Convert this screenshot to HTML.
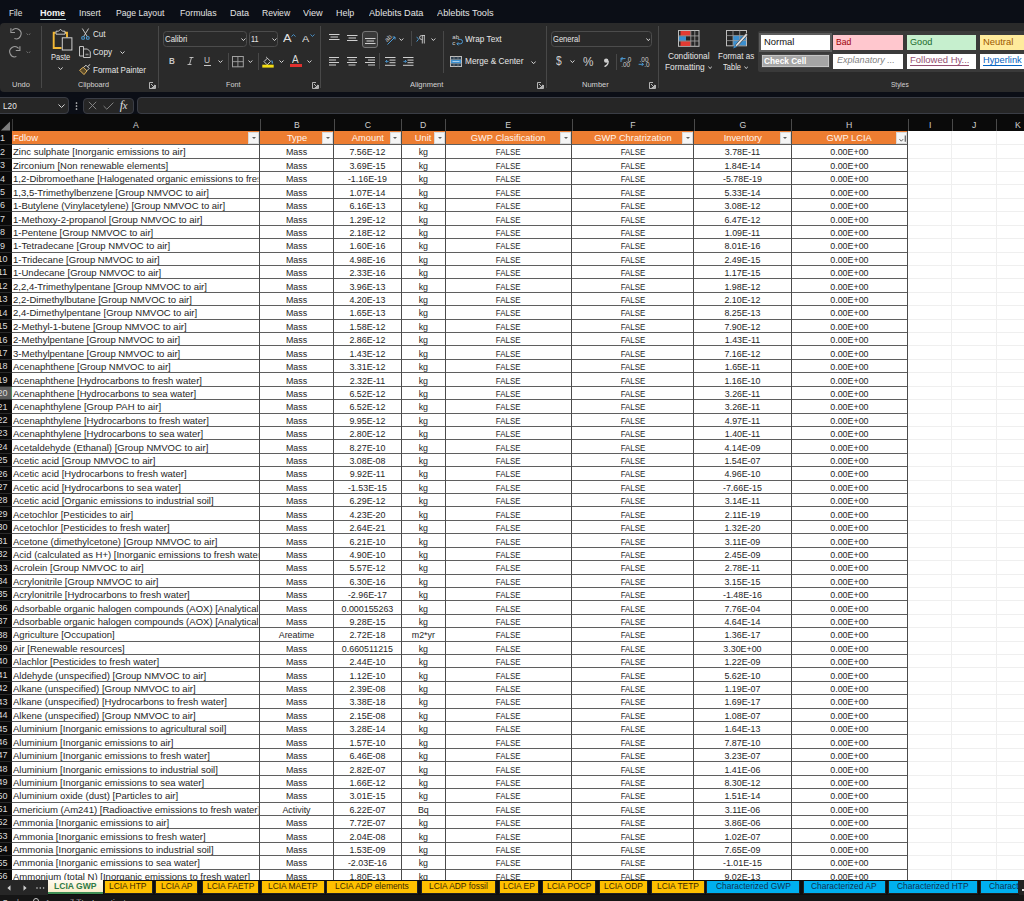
<!DOCTYPE html><html><head><meta charset="utf-8"><style>
*{box-sizing:border-box}
html,body{margin:0;padding:0}
body{width:1024px;height:901px;overflow:hidden;position:relative;background:#0b0e16;font-family:"Liberation Sans",sans-serif;}
.a{position:absolute}
.t{position:absolute;white-space:nowrap;line-height:1;transform-origin:0 0}
.sep{position:absolute;width:1px;background:#484848}
.cell{position:absolute;white-space:nowrap;line-height:13px;height:13px;font-size:9.3px;color:#1e1e1e;overflow:hidden;text-align:center}
.hl{position:absolute;height:1px;background:#5f5f5f}
.vl{position:absolute;width:1px;background:#4c4c4c}
.tab{position:absolute;top:880.7px;height:13.2px;border:1px solid #222;border-top:none}
.ot{background:#ffc000}
.bt{background:#00b0f0}
.fb{position:absolute;width:11px;height:12.3px;background:#f5f5f5;border:1px solid #dadada}
.fb:after{content:"";position:absolute;left:2.7px;top:3.8px;border-left:2.3px solid transparent;border-right:2.3px solid transparent;border-top:2.6px solid #5f5f5f}
</style></head><body>

<div class="t" style="left:8.60px;top:8.10px;font-size:9.45px;color:#e4e4e4;transform:scaleX(0.874);">File</div>
<div class="t" style="left:78.90px;top:8.10px;font-size:9.45px;color:#e4e4e4;transform:scaleX(0.919);">Insert</div>
<div class="t" style="left:116.40px;top:8.10px;font-size:9.45px;color:#e4e4e4;transform:scaleX(0.912);">Page Layout</div>
<div class="t" style="left:179.60px;top:8.10px;font-size:9.45px;color:#e4e4e4;transform:scaleX(0.932);">Formulas</div>
<div class="t" style="left:229.60px;top:8.10px;font-size:9.45px;color:#e4e4e4;transform:scaleX(0.956);">Data</div>
<div class="t" style="left:261.60px;top:8.10px;font-size:9.45px;color:#e4e4e4;transform:scaleX(0.907);">Review</div>
<div class="t" style="left:302.90px;top:8.10px;font-size:9.45px;color:#e4e4e4;transform:scaleX(0.965);">View</div>
<div class="t" style="left:336.20px;top:8.10px;font-size:9.45px;color:#e4e4e4;transform:scaleX(0.943);">Help</div>
<div class="t" style="left:368.50px;top:8.10px;font-size:9.45px;color:#e4e4e4;transform:scaleX(0.968);">Ablebits Data</div>
<div class="t" style="left:437.40px;top:8.10px;font-size:9.45px;color:#e4e4e4;transform:scaleX(0.974);">Ablebits Tools</div>
<div class="t" style="left:40.20px;top:8.10px;font-size:9.45px;color:#f4f4f4;transform:scaleX(0.959);font-weight:bold;">Home</div>
<div class="a" style="left:40px;top:18.8px;width:26px;height:1.6px;background:#c6dedb;border-radius:1px"></div>
<div class="a" style="left:0;top:22.6px;width:1030px;height:69.2px;background:#2a2a2a;border-radius:4px"></div>
<div class="sep" style="left:40.6px;top:26px;height:62px"></div>
<div class="sep" style="left:157.9px;top:26px;height:62px"></div>
<div class="sep" style="left:319.6px;top:26px;height:62px"></div>
<div class="sep" style="left:545.6px;top:26px;height:62px"></div>
<div class="sep" style="left:657.7px;top:26px;height:62px"></div>
<div class="sep" style="left:227.5px;top:53px;height:17px"></div>
<div class="sep" style="left:257.7px;top:53px;height:17px"></div>
<div class="sep" style="left:379.4px;top:53px;height:16px"></div>
<div class="sep" style="left:410.6px;top:31px;height:15px"></div>
<div class="sep" style="left:443.4px;top:31px;height:42px"></div>
<div class="sep" style="left:615.6px;top:53.8px;height:16px"></div>
<div class="t" style="left:11.70px;top:81.40px;font-size:7.56px;color:#d4d4d4;transform:scaleX(0.996);">Undo</div>
<div class="t" style="left:78.00px;top:81.40px;font-size:7.56px;color:#d4d4d4;transform:scaleX(0.958);">Clipboard</div>
<div class="t" style="left:225.60px;top:81.40px;font-size:7.56px;color:#d4d4d4;transform:scaleX(0.953);">Font</div>
<div class="t" style="left:410.00px;top:81.40px;font-size:7.56px;color:#d4d4d4;transform:scaleX(0.994);">Alignment</div>
<div class="t" style="left:582.00px;top:81.40px;font-size:7.56px;color:#d4d4d4;transform:scaleX(0.997);">Number</div>
<div class="t" style="left:890.80px;top:81.40px;font-size:7.56px;color:#d4d4d4;transform:scaleX(0.859);">Styles</div>
<svg class="a" style="left:148.8px;top:81.6px" width="7" height="7" viewBox="0 0 7 7"><path d="M6.5 3V6.5H0.5V0.5H4" fill="none" stroke="#c4c4c4" stroke-width="0.9"/><path d="M2 2l3.5 3.5M5.5 2.8v2.7H2.8" fill="none" stroke="#c4c4c4" stroke-width="0.9"/></svg>
<svg class="a" style="left:311.6px;top:81.6px" width="7" height="7" viewBox="0 0 7 7"><path d="M6.5 3V6.5H0.5V0.5H4" fill="none" stroke="#c4c4c4" stroke-width="0.9"/><path d="M2 2l3.5 3.5M5.5 2.8v2.7H2.8" fill="none" stroke="#c4c4c4" stroke-width="0.9"/></svg>
<svg class="a" style="left:537.2px;top:81.6px" width="7" height="7" viewBox="0 0 7 7"><path d="M6.5 3V6.5H0.5V0.5H4" fill="none" stroke="#c4c4c4" stroke-width="0.9"/><path d="M2 2l3.5 3.5M5.5 2.8v2.7H2.8" fill="none" stroke="#c4c4c4" stroke-width="0.9"/></svg>
<svg class="a" style="left:649.2px;top:81.6px" width="7" height="7" viewBox="0 0 7 7"><path d="M6.5 3V6.5H0.5V0.5H4" fill="none" stroke="#c4c4c4" stroke-width="0.9"/><path d="M2 2l3.5 3.5M5.5 2.8v2.7H2.8" fill="none" stroke="#c4c4c4" stroke-width="0.9"/></svg>
<svg class="a" style="left:5px;top:25px" width="25" height="35" viewBox="5 25 25 35"><g fill="none" stroke="#9c9c9c" stroke-width="1.1"><path d="M12.2 30.3A5.1 5.1 0 1 1 14.4 38.6"/><path d="M10.9 28.3V32.5H15"/></g><g fill="none" stroke="#9c9c9c" stroke-width="1.1" transform="matrix(-1 0 0 1 30.8 18)"><path d="M12.2 30.3A5.1 5.1 0 1 1 14.4 38.6"/><path d="M10.9 28.3V32.5H15"/></g></svg>
<svg class="a" style="left:26.30px;top:32.50px" width="4.9" height="2.8" viewBox="-0.5 -0.5 4.9 2.8"><path d="M0 0L1.95 1.80L3.90 0" fill="none" stroke="#777" stroke-width="0.9"/></svg>
<svg class="a" style="left:26.30px;top:50.50px" width="4.9" height="2.8" viewBox="-0.5 -0.5 4.9 2.8"><path d="M0 0L1.95 1.80L3.90 0" fill="none" stroke="#777" stroke-width="0.9"/></svg>
<svg class="a" style="left:51px;top:27.5px" width="23" height="23" viewBox="0 0 23 23">
<path d="M4.5 4.8H2.7V20H10.5" fill="none" stroke="#f2b836" stroke-width="1.9"/>
<path d="M13.5 4.8H16V9.5" fill="none" stroke="#f2b836" stroke-width="1.9"/>
<path d="M5 6.2V3.2H7.6L9.5 1.2L11.4 3.2H14V6.2Z" fill="#292929" stroke="#d4d4d4" stroke-width="0.9"/>
<rect x="11.3" y="9.8" width="9.6" height="12.2" fill="#292929" stroke="#cfcfcf" stroke-width="1"/>
</svg>
<div class="t" style="left:50.80px;top:52.99px;font-size:8.87px;color:#e6e6e6;transform:scaleX(0.848);">Paste</div>
<svg class="a" style="left:57.70px;top:66.90px" width="5.2" height="3.0" viewBox="-0.5 -0.5 5.2 3.0"><path d="M0 0L2.10 2.00L4.20 0" fill="none" stroke="#d8d8d8" stroke-width="1"/></svg>
<svg class="a" style="left:80.5px;top:28px" width="9" height="12" viewBox="0 0 9 12">
<path d="M1.3 0.5L6.3 8.6M7.6 0.5L2.6 8.6" stroke="#d4d4d4" stroke-width="0.9" fill="none"/>
<circle cx="2.1" cy="9.9" r="1.4" fill="none" stroke="#4c9bd6" stroke-width="1.1"/><circle cx="6.8" cy="9.9" r="1.4" fill="none" stroke="#4c9bd6" stroke-width="1.1"/>
</svg>
<div class="t" style="left:92.90px;top:29.82px;font-size:8.72px;color:#e6e6e6;transform:scaleX(0.922);">Cut</div>
<svg class="a" style="left:79px;top:46px" width="12" height="12" viewBox="0 0 12 12">
<path d="M4.5 0.5H0.5V10H4" fill="none" stroke="#d4d4d4" stroke-width="0.9"/>
<path d="M4.5 3H8.5L11.3 5.8V11.5H4.5Z" fill="none" stroke="#d4d4d4" stroke-width="0.9"/>
<path d="M4.5 0.5V3" stroke="#d4d4d4" stroke-width="0.9"/>
<path d="M6.5 8.5h3" stroke="#888" stroke-width="1.6"/>
</svg>
<div class="t" style="left:92.90px;top:48.12px;font-size:8.72px;color:#e6e6e6;transform:scaleX(0.933);">Copy</div>
<svg class="a" style="left:120.10px;top:51.30px" width="5.0" height="3.0" viewBox="-0.5 -0.5 5.0 3.0"><path d="M0 0L2.00 2.00L4.00 0" fill="none" stroke="#d8d8d8" stroke-width="1"/></svg>
<svg class="a" style="left:79px;top:64px" width="12" height="11" viewBox="0 0 12 11">
<path d="M0.6 6.2L4.3 3.2L8 6.9L5 10.6Z" fill="#5a4a2a" stroke="#f0c060" stroke-width="0.9"/>
<path d="M4.6 3.4L7 1.2L10.2 4.4L8 6.7" fill="none" stroke="#d8d8d8" stroke-width="0.9"/>
<path d="M8.6 2.6L11.2 0.4" stroke="#d8d8d8" stroke-width="1"/>
</svg>
<div class="t" style="left:92.90px;top:66.12px;font-size:8.72px;color:#e6e6e6;transform:scaleX(0.919);">Format Painter</div>
<div class="a" style="left:163.4px;top:31.1px;width:83.3px;height:16.4px;border:1px solid #4c4c4c;border-radius:3.5px"></div>
<div class="t" style="left:164.80px;top:35.17px;font-size:9.01px;color:#e6e6e6;transform:scaleX(0.877);">Calibri</div>
<svg class="a" style="left:240.80px;top:38.20px" width="4.9" height="3.1" viewBox="-0.5 -0.5 4.9 3.1"><path d="M0 0L1.95 2.10L3.90 0" fill="none" stroke="#d8d8d8" stroke-width="1"/></svg>
<div class="a" style="left:249px;top:31.1px;width:29px;height:16.4px;border:1px solid #4c4c4c;border-radius:3.5px"></div>
<div class="t" style="left:251.30px;top:35.17px;font-size:9.01px;color:#e6e6e6;transform:scaleX(0.800);">11</div>
<svg class="a" style="left:272.00px;top:38.20px" width="5.0" height="3.1" viewBox="-0.5 -0.5 5.0 3.1"><path d="M0 0L2.00 2.10L4.00 0" fill="none" stroke="#d8d8d8" stroke-width="1"/></svg>
<div class="t" style="left:282.70px;top:33.20px;font-size:11.34px;color:#e0e0e0;transform:scaleX(1.132);">A</div>
<svg class="a" style="left:290.8px;top:33.6px" width="5" height="3" viewBox="0 0 5 3"><path d="M0.5 2.5L2.5 0.6L4.5 2.5" fill="none" stroke="#4c9bd6" stroke-width="0.9"/></svg>
<div class="t" style="left:301.90px;top:35.17px;font-size:9.01px;color:#e0e0e0;transform:scaleX(1.209);">A</div>
<svg class="a" style="left:309.5px;top:34px" width="5" height="3" viewBox="0 0 5 3"><path d="M0.5 0.5L2.5 2.4L4.5 0.5" fill="none" stroke="#4c9bd6" stroke-width="0.9"/></svg>
<div class="t" style="left:168.60px;top:55.83px;font-size:9.88px;color:#c8c8c8;transform:scaleX(0.815);font-weight:bold;">B</div>
<svg class="a" style="left:186.5px;top:57px" width="7" height="8" viewBox="0 0 7 8"><path d="M2.5 0.5h4M0.5 7.5h4M4.5 0.5L2.5 7.5" fill="none" stroke="#c8c8c8" stroke-width="0.9"/></svg>
<div class="t" style="left:204.20px;top:55.93px;font-size:9.30px;color:#c8c8c8;transform:scaleX(0.896);">U</div>
<div class="a" style="left:204px;top:65.2px;width:6.5px;height:0.9px;background:#c8c8c8"></div>
<svg class="a" style="left:218.10px;top:60.00px" width="4.9" height="3.0" viewBox="-0.5 -0.5 4.9 3.0"><path d="M0 0L1.95 2.00L3.90 0" fill="none" stroke="#d8d8d8" stroke-width="1"/></svg>
<svg class="a" style="left:231.5px;top:56px" width="12" height="11.5" viewBox="0 0 12 11.5"><rect x="0.5" y="0.5" width="10.8" height="10.3" fill="none" stroke="#a0a0a0" stroke-width="1"/><path d="M5.9 0.5v10.3M0.5 5.65h10.8" stroke="#a0a0a0" stroke-width="0.9"/></svg>
<svg class="a" style="left:248.30px;top:60.00px" width="4.8" height="3.0" viewBox="-0.5 -0.5 4.8 3.0"><path d="M0 0L1.90 2.00L3.80 0" fill="none" stroke="#d8d8d8" stroke-width="1"/></svg>
<svg class="a" style="left:261.5px;top:55.5px" width="12" height="12.5" viewBox="0 0 12 12.5">
<path d="M2 5.6L5.4 2.2L8.6 5.4L5.2 8.8Z" fill="none" stroke="#dcdcdc" stroke-width="0.9"/>
<path d="M5.4 2.2L4.2 1" stroke="#dcdcdc" stroke-width="0.9"/>
<path d="M9.6 4.5C10.6 6 10.6 7 9.8 7.4" fill="none" stroke="#4c9bd6" stroke-width="1.2"/>
<rect x="0.3" y="8.7" width="11.4" height="2.9" fill="#f2dc14"/>
</svg>
<svg class="a" style="left:278.50px;top:60.00px" width="5.0" height="3.0" viewBox="-0.5 -0.5 5.0 3.0"><path d="M0 0L2.00 2.00L4.00 0" fill="none" stroke="#d8d8d8" stroke-width="1"/></svg>
<div class="t" style="left:292.40px;top:54.89px;font-size:10.17px;color:#dcdcdc;transform:scaleX(0.983);">A</div>
<div class="a" style="left:289.7px;top:64.3px;width:12.5px;height:3px;background:#e0302e"></div>
<svg class="a" style="left:306.70px;top:60.00px" width="4.9" height="3.0" viewBox="-0.5 -0.5 4.9 3.0"><path d="M0 0L1.95 2.00L3.90 0" fill="none" stroke="#d8d8d8" stroke-width="1"/></svg>
<svg class="a" style="left:328.5px;top:33px" width="12" height="12" viewBox="0 0 12 12"><path d="M0 1.5H10.5" stroke="#cfcfcf" stroke-width="1"/><path d="M1.5 4H9" stroke="#cfcfcf" stroke-width="1"/><path d="M0 6.5H10.5" stroke="#cfcfcf" stroke-width="1"/></svg>
<svg class="a" style="left:346.5px;top:33px" width="12" height="12" viewBox="0 0 12 12"><path d="M0 2.5H10.5" stroke="#cfcfcf" stroke-width="1"/><path d="M1.5 5H9" stroke="#cfcfcf" stroke-width="1"/><path d="M0 7.5H10.5" stroke="#cfcfcf" stroke-width="1"/></svg>
<div class="a" style="left:361.9px;top:31.2px;width:15.9px;height:16.5px;border:1px solid #777;border-radius:3px;background:#3a3a3a"></div>
<svg class="a" style="left:364.5px;top:33.5px" width="12" height="12" viewBox="0 0 12 12"><path d="M0 4.5H10.5" stroke="#cfcfcf" stroke-width="1"/><path d="M1.5 7H9" stroke="#cfcfcf" stroke-width="1"/><path d="M0 9.5H10.5" stroke="#cfcfcf" stroke-width="1"/></svg>
<svg class="a" style="left:384px;top:32.5px" width="13" height="13" viewBox="0 0 13 13">
<text x="0.5" y="7.5" font-size="6.5" fill="#d0d0d0" font-family="Liberation Sans" transform="rotate(-45 4 5)">ab</text>
<path d="M3.5 11.5L11 4M8.5 4H11V6.5" fill="none" stroke="#4c9bd6" stroke-width="1"/>
</svg>
<svg class="a" style="left:399.00px;top:37.80px" width="4.8" height="3.0" viewBox="-0.5 -0.5 4.8 3.0"><path d="M0 0L1.90 2.00L3.80 0" fill="none" stroke="#d8d8d8" stroke-width="1"/></svg>
<svg class="a" style="left:415.5px;top:34.5px" width="10" height="9" viewBox="0 0 10 9">
<path d="M0.6 1.8L2.6 4.2L0.6 6.6" fill="none" stroke="#4c9bd6" stroke-width="0.9"/>
<path d="M6.3 0.5V8.5M8.3 0.5V8.5M9 0.5H5.6A2 2 0 0 0 5.6 4.5H6.3" fill="none" stroke="#d0d0d0" stroke-width="0.9"/>
</svg>
<svg class="a" style="left:430.80px;top:37.80px" width="4.8" height="3.0" viewBox="-0.5 -0.5 4.8 3.0"><path d="M0 0L1.90 2.00L3.80 0" fill="none" stroke="#d8d8d8" stroke-width="1"/></svg>
<svg class="a" style="left:329px;top:56px" width="12" height="12" viewBox="0 0 12 12"><path d="M0 1.5H10" stroke="#cfcfcf" stroke-width="1"/><path d="M0 4H7" stroke="#cfcfcf" stroke-width="1"/><path d="M0 6.5H10" stroke="#cfcfcf" stroke-width="1"/><path d="M0 9H7" stroke="#cfcfcf" stroke-width="1"/></svg>
<svg class="a" style="left:346.5px;top:56px" width="12" height="12" viewBox="0 0 12 12"><path d="M0 1.5H10" stroke="#cfcfcf" stroke-width="1"/><path d="M1.5 4H8.5" stroke="#cfcfcf" stroke-width="1"/><path d="M0 6.5H10" stroke="#cfcfcf" stroke-width="1"/><path d="M1.5 9H8.5" stroke="#cfcfcf" stroke-width="1"/></svg>
<svg class="a" style="left:365px;top:56px" width="12" height="12" viewBox="0 0 12 12"><path d="M0 1.5H10" stroke="#cfcfcf" stroke-width="1"/><path d="M3 4H10" stroke="#cfcfcf" stroke-width="1"/><path d="M0 6.5H10" stroke="#cfcfcf" stroke-width="1"/><path d="M3 9H10" stroke="#cfcfcf" stroke-width="1"/></svg>
<svg class="a" style="left:384.5px;top:56px" width="11" height="11" viewBox="0 0 11 11">
<path d="M0 1.5h10.5M4.5 4.1h6M4.5 6.7h6M0 9.3h10.5" stroke="#cfcfcf" stroke-width="1"/>
<path d="M3.6 5.4H0.6M2 4L0.6 5.4L2 6.8" fill="none" stroke="#4c9bd6" stroke-width="0.9"/>
</svg>
<svg class="a" style="left:402.5px;top:56px" width="11" height="11" viewBox="0 0 11 11">
<path d="M0 1.5h10.5M4.5 4.1h6M4.5 6.7h6M0 9.3h10.5" stroke="#cfcfcf" stroke-width="1"/>
<path d="M0.4 5.4H3.4M2 4L3.4 5.4L2 6.8" fill="none" stroke="#4c9bd6" stroke-width="0.9"/>
</svg>
<svg class="a" style="left:451.5px;top:33.5px" width="12" height="12" viewBox="0 0 12 12">
<text x="0.3" y="5.3" font-size="6" fill="#d8d8d8" font-family="Liberation Sans">ab</text>
<text x="0.3" y="11.3" font-size="6" fill="#d8d8d8" font-family="Liberation Sans">c</text>
<path d="M5 9.8H8.3A2.2 2.2 0 0 0 8.3 5.4H6M6.3 8.3L4.8 9.8L6.3 11.3" fill="none" stroke="#4c9bd6" stroke-width="1"/>
</svg>
<div class="t" style="left:464.50px;top:35.42px;font-size:8.72px;color:#e6e6e6;transform:scaleX(0.940);">Wrap Text</div>
<svg class="a" style="left:450px;top:55.8px" width="12" height="11" viewBox="0 0 12 11">
<rect x="0.5" y="0.5" width="11" height="10" fill="#2b3f52" stroke="#bdbdbd" stroke-width="1"/>
<rect x="1" y="3.5" width="10" height="4" fill="#3a8fd0"/>
<path d="M0.5 3.4h11M0.5 7.6h11M4 0.5v3M8 0.5v3M4 7.6v3M8 7.6v3" stroke="#8a8a8a" stroke-width="0.7"/>
<path d="M2.5 5.5h7" stroke="#d8eaf8" stroke-width="0.7"/>
</svg>
<div class="t" style="left:464.50px;top:57.22px;font-size:8.72px;color:#e6e6e6;transform:scaleX(0.949);">Merge &amp; Center</div>
<svg class="a" style="left:531.20px;top:60.50px" width="5.2" height="3.2" viewBox="-0.5 -0.5 5.2 3.2"><path d="M0 0L2.10 2.20L4.20 0" fill="none" stroke="#d8d8d8" stroke-width="1"/></svg>
<div class="a" style="left:551.2px;top:31.3px;width:100.5px;height:16.1px;border:1px solid #4c4c4c;border-radius:3.5px"></div>
<div class="t" style="left:552.70px;top:35.05px;font-size:9.16px;color:#e6e6e6;transform:scaleX(0.828);">General</div>
<svg class="a" style="left:645.60px;top:37.90px" width="4.7" height="3.2" viewBox="-0.5 -0.5 4.7 3.2"><path d="M0 0L1.85 2.20L3.70 0" fill="none" stroke="#d8d8d8" stroke-width="1"/></svg>
<div class="t" style="left:556.20px;top:55.22px;font-size:12.50px;color:#cfcfcf;transform:scaleX(0.822);">$</div>
<svg class="a" style="left:569.80px;top:60.10px" width="4.9" height="3.1" viewBox="-0.5 -0.5 4.9 3.1"><path d="M0 0L1.95 2.10L3.90 0" fill="none" stroke="#d8d8d8" stroke-width="1"/></svg>
<div class="t" style="left:582.60px;top:54.78px;font-size:13.37px;color:#cfcfcf;transform:scaleX(0.882);">%</div>
<svg class="a" style="left:602.5px;top:57.5px" width="7" height="9" viewBox="0 0 7 9"><circle cx="3.2" cy="2.6" r="2.2" fill="#cfcfcf"/><path d="M5.1 3C5.3 5.5 4 7.6 1.5 8.6" fill="none" stroke="#cfcfcf" stroke-width="1.4"/></svg>
<svg class="a" style="left:619.5px;top:56px" width="13" height="11" viewBox="0 0 13 11">
<text x="6" y="5.8" font-size="6.4" fill="#cfcfcf" font-family="Liberation Sans">.0</text>
<text x="1.2" y="11" font-size="6.4" fill="#cfcfcf" font-family="Liberation Sans">.00</text>
<path d="M5.5 2.6H1M2.6 1L1 2.6L2.6 4.2M1 2.6V6" fill="none" stroke="#4c9bd6" stroke-width="1"/>
</svg>
<svg class="a" style="left:637.5px;top:56px" width="13" height="11" viewBox="0 0 13 11">
<text x="1.6" y="5.8" font-size="6.4" fill="#cfcfcf" font-family="Liberation Sans">.00</text>
<text x="6.2" y="11" font-size="6.4" fill="#cfcfcf" font-family="Liberation Sans">.0</text>
<path d="M0.6 8.3H5.4M3.8 6.7L5.4 8.3L3.8 9.9" fill="none" stroke="#4c9bd6" stroke-width="1"/>
</svg>
<svg class="a" style="left:678.3px;top:30px" width="21.5" height="17" viewBox="0 0 21.5 17">
<rect x="0.5" y="0.5" width="20.5" height="15.8" fill="#262626" stroke="#bdbdbd" stroke-width="1"/>
<rect x="2.5" y="1" width="10" height="4.8" fill="#e23b33"/>
<rect x="1" y="6.2" width="7" height="4.6" fill="#3a8fd0"/>
<rect x="2.5" y="11.2" width="10" height="4.8" fill="#e23b33"/>
<path d="M0.5 5.9h20.5M0.5 11h20.5M12.8 0.5v15.8M16.8 0.5v15.8" stroke="#a8a8a8" stroke-width="0.8"/>
</svg>
<div class="t" style="left:667.80px;top:52.32px;font-size:8.72px;color:#e6e6e6;transform:scaleX(0.951);">Conditional</div>
<div class="t" style="left:664.70px;top:63.02px;font-size:8.72px;color:#e6e6e6;transform:scaleX(0.952);">Formatting</div>
<svg class="a" style="left:707.50px;top:65.90px" width="4.3" height="3.1" viewBox="-0.5 -0.5 4.3 3.1"><path d="M0 0L1.65 2.10L3.30 0" fill="none" stroke="#d8d8d8" stroke-width="0.9"/></svg>
<svg class="a" style="left:725.5px;top:30px" width="23" height="19" viewBox="0 0 23 19">
<rect x="0.5" y="0.5" width="20" height="15.3" fill="#262626" stroke="#bdbdbd" stroke-width="1"/>
<rect x="7" y="5.6" width="13" height="9.7" fill="#3a8fd0"/>
<path d="M0.5 5.6h20M0.5 10.6h20M7 0.5v15.3M13.7 0.5v15.3" stroke="#9a9a9a" stroke-width="0.8"/>
<path d="M8.5 17.5L10 14.2L20 3.2L21.8 4.8L11.8 15.8Z" fill="#dcdcdc" stroke="#262626" stroke-width="0.6"/>
<path d="M7.2 18.6L8.4 15.2L11.2 16.8Z" fill="#3a8fd0"/>
</svg>
<div class="t" style="left:717.80px;top:52.32px;font-size:8.72px;color:#e6e6e6;transform:scaleX(0.922);">Format as</div>
<div class="t" style="left:723.00px;top:63.02px;font-size:8.72px;color:#e6e6e6;transform:scaleX(0.864);">Table</div>
<svg class="a" style="left:743.70px;top:65.90px" width="4.5" height="3.1" viewBox="-0.5 -0.5 4.5 3.1"><path d="M0 0L1.75 2.10L3.50 0" fill="none" stroke="#d8d8d8" stroke-width="0.9"/></svg>
<div class="a" style="left:757.6px;top:30.6px;width:280px;height:41.3px;background:#3a3a3a;border-radius:2px"></div>
<div class="a" style="left:758.6px;top:33px;width:73.5px;height:19px;background:#5c5c5c"></div>
<div class="a" style="left:760.6px;top:35px;width:69.4px;height:15px;background:#ffffff"></div>
<div class="a" style="left:833.3px;top:35px;width:69.6px;height:15px;background:#ffc7ce"></div>
<div class="a" style="left:906.7px;top:34.7px;width:69.3px;height:15.3px;background:#c6efce"></div>
<div class="a" style="left:979.9px;top:34.7px;width:60px;height:15.3px;background:#ffeb9c"></div>
<div class="a" style="left:833.3px;top:53.6px;width:69.6px;height:15.4px;background:#ffffff"></div>
<div class="a" style="left:906.7px;top:53.7px;width:69.3px;height:15.2px;background:#ffffff"></div>
<div class="a" style="left:979.9px;top:53.7px;width:60px;height:15.2px;background:#ffffff"></div>
<div class="a" style="left:760.6px;top:53.6px;width:69.4px;height:14.7px;background:#a5a5a5;border:1.8px solid #454545;box-shadow:inset 0 0 0 0.7px #d0d0d0"></div>
<div class="t" style="left:763.80px;top:37.55px;font-size:9.16px;color:#111111;transform:scaleX(1.029);">Normal</div>
<div class="t" style="left:836.30px;top:37.55px;font-size:9.16px;color:#9c0006;transform:scaleX(0.939);">Bad</div>
<div class="t" style="left:909.70px;top:37.72px;font-size:8.72px;color:#1b6a2c;transform:scaleX(1.046);">Good</div>
<div class="t" style="left:982.90px;top:37.72px;font-size:8.72px;color:#9c5700;transform:scaleX(1.077);">Neutral</div>
<div class="t" style="left:763.80px;top:55.78px;font-size:9.59px;color:#ffffff;transform:scaleX(0.864);font-weight:bold;">Check Cell</div>
<div class="t" style="left:837.00px;top:56.29px;font-size:8.87px;color:#7f7f7f;transform:scaleX(1.020);font-style:italic;">Explanatory ...</div>
<div class="t" style="left:909.70px;top:56.29px;font-size:8.87px;color:#954f72;transform:scaleX(1.072);">Followed Hy...</div>
<div class="a" style="left:909.7px;top:64.7px;width:59.5px;height:0.9px;background:#954f72"></div>
<div class="t" style="left:982.90px;top:56.29px;font-size:8.87px;color:#0563c1;transform:scaleX(1.048);">Hyperlink</div>
<div class="a" style="left:982.9px;top:64.7px;width:38.8px;height:0.9px;background:#0563c1"></div>
<div class="a" style="left:-5px;top:97.3px;width:74px;height:16.4px;background:#262626;border:1px solid #3a3d45;border-radius:4px"></div>
<div class="t" style="left:2.70px;top:101.72px;font-size:8.72px;color:#e8e8e8;transform:scaleX(0.941);">L20</div>
<svg class="a" style="left:58.20px;top:103.80px" width="7.1" height="4.0" viewBox="-0.5 -0.5 7.1 4.0"><path d="M0 0L3.05 3.00L6.10 0" fill="none" stroke="#d8d8d8" stroke-width="1"/></svg>
<svg class="a" style="left:75.3px;top:101.8px" width="3" height="8" viewBox="0 0 3 8"><circle cx="1.5" cy="1" r="0.85" fill="#d0d0d0"/><circle cx="1.5" cy="4" r="0.85" fill="#d0d0d0"/><circle cx="1.5" cy="7" r="0.85" fill="#d0d0d0"/></svg>
<div class="a" style="left:83.3px;top:97.5px;width:50.6px;height:16px;background:#262626;border:1px solid #3a3d45;border-radius:4px"></div>
<svg class="a" style="left:87.5px;top:101.3px" width="9" height="9" viewBox="0 0 9 9"><path d="M0.8 0.8l7.4 7.4M8.2 0.8l-7.4 7.4" stroke="#8c8c8c" stroke-width="0.9"/></svg>
<svg class="a" style="left:102.5px;top:101.8px" width="11" height="8" viewBox="0 0 11 8"><path d="M0.6 4L3.8 7.2L10.4 0.6" fill="none" stroke="#8c8c8c" stroke-width="0.9"/></svg>
<div class="t" style="left:119.8px;top:99.2px;font-size:12.5px;color:#dedede;font-style:italic;font-family:'Liberation Serif'">f<span style="font-size:10.5px;margin-left:-0.5px">x</span></div>
<div class="a" style="left:137.3px;top:97.2px;width:900px;height:16.4px;background:#262626;border:1px solid #3a3d45;border-radius:4px"></div>
<div class="a" style="left:0;top:113.8px;width:1024px;height:17.6px;background:#0a0a0a"></div>
<svg class="a" style="left:0;top:120.5px" width="11" height="10" viewBox="0 0 11 10"><path d="M0.8 9.6L10 0.6V9.6z" fill="#7c7c7c"/></svg>
<div class="a" style="left:259.5px;top:118.8px;width:1px;height:12.6px;background:#4a4a4a"></div>
<div class="t" style="left:11.7px;width:247.8px;top:121.05px;font-size:9.16px;color:#d0d0d0;text-align:center;transform:scaleX(0.95);transform-origin:50% 0">A</div>
<div class="a" style="left:333.5px;top:118.8px;width:1px;height:12.6px;background:#4a4a4a"></div>
<div class="t" style="left:259.5px;width:74.0px;top:121.05px;font-size:9.16px;color:#d0d0d0;text-align:center;transform:scaleX(0.95);transform-origin:50% 0">B</div>
<div class="a" style="left:401.3px;top:118.8px;width:1px;height:12.6px;background:#4a4a4a"></div>
<div class="t" style="left:333.5px;width:67.80000000000001px;top:121.05px;font-size:9.16px;color:#d0d0d0;text-align:center;transform:scaleX(0.95);transform-origin:50% 0">C</div>
<div class="a" style="left:445.4px;top:118.8px;width:1px;height:12.6px;background:#4a4a4a"></div>
<div class="t" style="left:401.3px;width:44.099999999999966px;top:121.05px;font-size:9.16px;color:#d0d0d0;text-align:center;transform:scaleX(0.95);transform-origin:50% 0">D</div>
<div class="a" style="left:571.7px;top:118.8px;width:1px;height:12.6px;background:#4a4a4a"></div>
<div class="t" style="left:445.4px;width:126.30000000000007px;top:121.05px;font-size:9.16px;color:#d0d0d0;text-align:center;transform:scaleX(0.95);transform-origin:50% 0">E</div>
<div class="a" style="left:693.6px;top:118.8px;width:1px;height:12.6px;background:#4a4a4a"></div>
<div class="t" style="left:571.7px;width:121.89999999999998px;top:121.05px;font-size:9.16px;color:#d0d0d0;text-align:center;transform:scaleX(0.95);transform-origin:50% 0">F</div>
<div class="a" style="left:791.3px;top:118.8px;width:1px;height:12.6px;background:#4a4a4a"></div>
<div class="t" style="left:693.6px;width:97.69999999999993px;top:121.05px;font-size:9.16px;color:#d0d0d0;text-align:center;transform:scaleX(0.95);transform-origin:50% 0">G</div>
<div class="a" style="left:907.5px;top:118.8px;width:1px;height:12.6px;background:#4a4a4a"></div>
<div class="t" style="left:791.3px;width:116.20000000000005px;top:121.05px;font-size:9.16px;color:#d0d0d0;text-align:center;transform:scaleX(0.95);transform-origin:50% 0">H</div>
<div class="a" style="left:951.8px;top:118.8px;width:1px;height:12.6px;background:#4a4a4a"></div>
<div class="t" style="left:907.5px;width:44.299999999999955px;top:121.05px;font-size:9.16px;color:#d0d0d0;text-align:center;transform:scaleX(0.95);transform-origin:50% 0">I</div>
<div class="a" style="left:996.2px;top:118.8px;width:1px;height:12.6px;background:#4a4a4a"></div>
<div class="t" style="left:951.8px;width:44.40000000000009px;top:121.05px;font-size:9.16px;color:#d0d0d0;text-align:center;transform:scaleX(0.95);transform-origin:50% 0">J</div>
<div class="t" style="left:996.2px;width:43.799999999999955px;top:121.05px;font-size:9.16px;color:#d0d0d0;text-align:center;transform:scaleX(0.95);transform-origin:50% 0">K</div>
<div class="a" style="left:11.5px;top:119px;width:1px;height:12.4px;background:#3c3c3c"></div>
<div class="a" style="left:11.7px;top:131.3px;width:1013px;height:748.7px;background:#ffffff"></div>
<div class="hl" style="left:907.5px;top:144.22px;width:120px;background:#efefef"></div>
<div class="hl" style="left:907.5px;top:157.63px;width:120px;background:#efefef"></div>
<div class="hl" style="left:907.5px;top:171.05px;width:120px;background:#efefef"></div>
<div class="hl" style="left:907.5px;top:184.46px;width:120px;background:#efefef"></div>
<div class="hl" style="left:907.5px;top:197.88px;width:120px;background:#efefef"></div>
<div class="hl" style="left:907.5px;top:211.29px;width:120px;background:#efefef"></div>
<div class="hl" style="left:907.5px;top:224.71px;width:120px;background:#efefef"></div>
<div class="hl" style="left:907.5px;top:238.12px;width:120px;background:#efefef"></div>
<div class="hl" style="left:907.5px;top:251.53px;width:120px;background:#efefef"></div>
<div class="hl" style="left:907.5px;top:264.95px;width:120px;background:#efefef"></div>
<div class="hl" style="left:907.5px;top:278.37px;width:120px;background:#efefef"></div>
<div class="hl" style="left:907.5px;top:291.78px;width:120px;background:#efefef"></div>
<div class="hl" style="left:907.5px;top:305.19px;width:120px;background:#efefef"></div>
<div class="hl" style="left:907.5px;top:318.61px;width:120px;background:#efefef"></div>
<div class="hl" style="left:907.5px;top:332.02px;width:120px;background:#efefef"></div>
<div class="hl" style="left:907.5px;top:345.44px;width:120px;background:#efefef"></div>
<div class="hl" style="left:907.5px;top:358.86px;width:120px;background:#efefef"></div>
<div class="hl" style="left:907.5px;top:372.27px;width:120px;background:#efefef"></div>
<div class="hl" style="left:907.5px;top:385.69px;width:120px;background:#efefef"></div>
<div class="hl" style="left:907.5px;top:399.10px;width:120px;background:#efefef"></div>
<div class="hl" style="left:907.5px;top:412.51px;width:120px;background:#efefef"></div>
<div class="hl" style="left:907.5px;top:425.93px;width:120px;background:#efefef"></div>
<div class="hl" style="left:907.5px;top:439.34px;width:120px;background:#efefef"></div>
<div class="hl" style="left:907.5px;top:452.76px;width:120px;background:#efefef"></div>
<div class="hl" style="left:907.5px;top:466.18px;width:120px;background:#efefef"></div>
<div class="hl" style="left:907.5px;top:479.59px;width:120px;background:#efefef"></div>
<div class="hl" style="left:907.5px;top:493.00px;width:120px;background:#efefef"></div>
<div class="hl" style="left:907.5px;top:506.42px;width:120px;background:#efefef"></div>
<div class="hl" style="left:907.5px;top:519.84px;width:120px;background:#efefef"></div>
<div class="hl" style="left:907.5px;top:533.25px;width:120px;background:#efefef"></div>
<div class="hl" style="left:907.5px;top:546.66px;width:120px;background:#efefef"></div>
<div class="hl" style="left:907.5px;top:560.08px;width:120px;background:#efefef"></div>
<div class="hl" style="left:907.5px;top:573.50px;width:120px;background:#efefef"></div>
<div class="hl" style="left:907.5px;top:586.91px;width:120px;background:#efefef"></div>
<div class="hl" style="left:907.5px;top:600.33px;width:120px;background:#efefef"></div>
<div class="hl" style="left:907.5px;top:613.74px;width:120px;background:#efefef"></div>
<div class="hl" style="left:907.5px;top:627.15px;width:120px;background:#efefef"></div>
<div class="hl" style="left:907.5px;top:640.57px;width:120px;background:#efefef"></div>
<div class="hl" style="left:907.5px;top:653.98px;width:120px;background:#efefef"></div>
<div class="hl" style="left:907.5px;top:667.40px;width:120px;background:#efefef"></div>
<div class="hl" style="left:907.5px;top:680.82px;width:120px;background:#efefef"></div>
<div class="hl" style="left:907.5px;top:694.23px;width:120px;background:#efefef"></div>
<div class="hl" style="left:907.5px;top:707.64px;width:120px;background:#efefef"></div>
<div class="hl" style="left:907.5px;top:721.06px;width:120px;background:#efefef"></div>
<div class="hl" style="left:907.5px;top:734.47px;width:120px;background:#efefef"></div>
<div class="hl" style="left:907.5px;top:747.89px;width:120px;background:#efefef"></div>
<div class="hl" style="left:907.5px;top:761.31px;width:120px;background:#efefef"></div>
<div class="hl" style="left:907.5px;top:774.72px;width:120px;background:#efefef"></div>
<div class="hl" style="left:907.5px;top:788.13px;width:120px;background:#efefef"></div>
<div class="hl" style="left:907.5px;top:801.55px;width:120px;background:#efefef"></div>
<div class="hl" style="left:907.5px;top:814.96px;width:120px;background:#efefef"></div>
<div class="hl" style="left:907.5px;top:828.38px;width:120px;background:#efefef"></div>
<div class="hl" style="left:907.5px;top:841.80px;width:120px;background:#efefef"></div>
<div class="hl" style="left:907.5px;top:855.21px;width:120px;background:#efefef"></div>
<div class="hl" style="left:907.5px;top:868.62px;width:120px;background:#efefef"></div>
<div class="vl" style="left:951.3px;top:131.3px;height:748.7px;background:#efefef"></div>
<div class="vl" style="left:995.7px;top:131.3px;height:748.7px;background:#efefef"></div>
<div class="a" style="left:11.7px;top:131.3px;width:895.8px;height:13.41px;background:#ed7d31"></div>
<div class="hl" style="left:11.7px;top:144.22px;width:895.8px"></div>
<div class="hl" style="left:11.7px;top:157.63px;width:895.8px"></div>
<div class="hl" style="left:11.7px;top:171.05px;width:895.8px"></div>
<div class="hl" style="left:11.7px;top:184.46px;width:895.8px"></div>
<div class="hl" style="left:11.7px;top:197.88px;width:895.8px"></div>
<div class="hl" style="left:11.7px;top:211.29px;width:895.8px"></div>
<div class="hl" style="left:11.7px;top:224.71px;width:895.8px"></div>
<div class="hl" style="left:11.7px;top:238.12px;width:895.8px"></div>
<div class="hl" style="left:11.7px;top:251.53px;width:895.8px"></div>
<div class="hl" style="left:11.7px;top:264.95px;width:895.8px"></div>
<div class="hl" style="left:11.7px;top:278.37px;width:895.8px"></div>
<div class="hl" style="left:11.7px;top:291.78px;width:895.8px"></div>
<div class="hl" style="left:11.7px;top:305.19px;width:895.8px"></div>
<div class="hl" style="left:11.7px;top:318.61px;width:895.8px"></div>
<div class="hl" style="left:11.7px;top:332.02px;width:895.8px"></div>
<div class="hl" style="left:11.7px;top:345.44px;width:895.8px"></div>
<div class="hl" style="left:11.7px;top:358.86px;width:895.8px"></div>
<div class="hl" style="left:11.7px;top:372.27px;width:895.8px"></div>
<div class="hl" style="left:11.7px;top:385.69px;width:895.8px"></div>
<div class="hl" style="left:11.7px;top:399.10px;width:895.8px"></div>
<div class="hl" style="left:11.7px;top:412.51px;width:895.8px"></div>
<div class="hl" style="left:11.7px;top:425.93px;width:895.8px"></div>
<div class="hl" style="left:11.7px;top:439.34px;width:895.8px"></div>
<div class="hl" style="left:11.7px;top:452.76px;width:895.8px"></div>
<div class="hl" style="left:11.7px;top:466.18px;width:895.8px"></div>
<div class="hl" style="left:11.7px;top:479.59px;width:895.8px"></div>
<div class="hl" style="left:11.7px;top:493.00px;width:895.8px"></div>
<div class="hl" style="left:11.7px;top:506.42px;width:895.8px"></div>
<div class="hl" style="left:11.7px;top:519.84px;width:895.8px"></div>
<div class="hl" style="left:11.7px;top:533.25px;width:895.8px"></div>
<div class="hl" style="left:11.7px;top:546.66px;width:895.8px"></div>
<div class="hl" style="left:11.7px;top:560.08px;width:895.8px"></div>
<div class="hl" style="left:11.7px;top:573.50px;width:895.8px"></div>
<div class="hl" style="left:11.7px;top:586.91px;width:895.8px"></div>
<div class="hl" style="left:11.7px;top:600.33px;width:895.8px"></div>
<div class="hl" style="left:11.7px;top:613.74px;width:895.8px"></div>
<div class="hl" style="left:11.7px;top:627.15px;width:895.8px"></div>
<div class="hl" style="left:11.7px;top:640.57px;width:895.8px"></div>
<div class="hl" style="left:11.7px;top:653.98px;width:895.8px"></div>
<div class="hl" style="left:11.7px;top:667.40px;width:895.8px"></div>
<div class="hl" style="left:11.7px;top:680.82px;width:895.8px"></div>
<div class="hl" style="left:11.7px;top:694.23px;width:895.8px"></div>
<div class="hl" style="left:11.7px;top:707.64px;width:895.8px"></div>
<div class="hl" style="left:11.7px;top:721.06px;width:895.8px"></div>
<div class="hl" style="left:11.7px;top:734.47px;width:895.8px"></div>
<div class="hl" style="left:11.7px;top:747.89px;width:895.8px"></div>
<div class="hl" style="left:11.7px;top:761.31px;width:895.8px"></div>
<div class="hl" style="left:11.7px;top:774.72px;width:895.8px"></div>
<div class="hl" style="left:11.7px;top:788.13px;width:895.8px"></div>
<div class="hl" style="left:11.7px;top:801.55px;width:895.8px"></div>
<div class="hl" style="left:11.7px;top:814.96px;width:895.8px"></div>
<div class="hl" style="left:11.7px;top:828.38px;width:895.8px"></div>
<div class="hl" style="left:11.7px;top:841.80px;width:895.8px"></div>
<div class="hl" style="left:11.7px;top:855.21px;width:895.8px"></div>
<div class="hl" style="left:11.7px;top:868.62px;width:895.8px"></div>
<div class="vl" style="left:259.0px;top:131.3px;height:748.7px"></div>
<div class="vl" style="left:333.0px;top:131.3px;height:748.7px"></div>
<div class="vl" style="left:400.8px;top:131.3px;height:748.7px"></div>
<div class="vl" style="left:444.9px;top:131.3px;height:748.7px"></div>
<div class="vl" style="left:571.2px;top:131.3px;height:748.7px"></div>
<div class="vl" style="left:693.1px;top:131.3px;height:748.7px"></div>
<div class="vl" style="left:790.8px;top:131.3px;height:748.7px"></div>
<div class="vl" style="left:907.0px;top:131.3px;height:748.7px"></div>
<div class="t" style="left:13.4px;top:133.69px;font-size:8.87px;color:#fff5ee;transform:scaleX(1.06)">Fdlow</div>
<div class="fb" style="left:248.00px;top:132px"></div>
<div class="t" style="left:259.5px;width:74.0px;text-align:center;top:133.69px;font-size:8.87px;color:#fff5ee;transform:scaleX(1.05);transform-origin:50% 0">Type</div>
<div class="fb" style="left:322.00px;top:132px"></div>
<div class="t" style="left:333.5px;width:67.80000000000001px;text-align:center;top:133.69px;font-size:8.87px;color:#fff5ee;transform:scaleX(1.05);transform-origin:50% 0">Amount</div>
<div class="fb" style="left:389.80px;top:132px"></div>
<div class="t" style="left:401.3px;width:44.099999999999966px;text-align:center;top:133.69px;font-size:8.87px;color:#fff5ee;transform:scaleX(1.05);transform-origin:50% 0">Unit</div>
<div class="fb" style="left:433.90px;top:132px"></div>
<div class="t" style="left:445.4px;width:126.30000000000007px;text-align:center;top:133.69px;font-size:8.87px;color:#fff5ee;transform:scaleX(1.05);transform-origin:50% 0">GWP Clasification</div>
<div class="fb" style="left:560.20px;top:132px"></div>
<div class="t" style="left:571.7px;width:121.89999999999998px;text-align:center;top:133.69px;font-size:8.87px;color:#fff5ee;transform:scaleX(1.05);transform-origin:50% 0">GWP Chratrization</div>
<div class="fb" style="left:682.10px;top:132px"></div>
<div class="t" style="left:693.6px;width:97.69999999999993px;text-align:center;top:133.69px;font-size:8.87px;color:#fff5ee;transform:scaleX(1.05);transform-origin:50% 0">Inventory</div>
<div class="fb" style="left:779.80px;top:132px"></div>
<div class="t" style="left:791.3px;width:116.20000000000005px;text-align:center;top:133.69px;font-size:8.87px;color:#fff5ee;transform:scaleX(1.05);transform-origin:50% 0">GWP LCIA</div>
<div class="a" style="left:896.00px;top:132px;width:11px;height:12.3px;background:#f5f5f5;border:1px solid #dadada"><svg style="position:absolute;left:1.5px;top:1.5px" width="8" height="8" viewBox="0 0 8 8"><path d="M0.5 4.2L2.3 6.2L4.1 4.2" fill="none" stroke="#5f5f5f" stroke-width="1"/><path d="M6.3 0.5V6.8" stroke="#5f5f5f" stroke-width="1.2"/></svg></div>
<div class="t" style="left:13.4px;width:236.2px;overflow:hidden;top:148.46px;height:12px;font-size:9.16px;color:#1e1e1e;transform:scaleX(1.04)">Zinc sulphate [Inorganic emissions to air]</div>
<div class="t" style="left:259.5px;width:74.0px;text-align:center;top:148.46px;font-size:8.88px;color:#1e1e1e">Mass</div>
<div class="t" style="left:333.5px;width:67.80000000000001px;text-align:center;top:148.46px;font-size:8.88px;color:#1e1e1e">7.56E-12</div>
<div class="t" style="left:401.3px;width:44.099999999999966px;text-align:center;top:148.46px;font-size:8.88px;color:#1e1e1e">kg</div>
<div class="t" style="left:445.4px;width:126.30000000000007px;text-align:center;top:148.46px;font-size:8.88px;color:#1e1e1e;transform:scaleX(0.89);transform-origin:50% 0">FALSE</div>
<div class="t" style="left:571.7px;width:121.89999999999998px;text-align:center;top:148.46px;font-size:8.88px;color:#1e1e1e;transform:scaleX(0.89);transform-origin:50% 0">FALSE</div>
<div class="t" style="left:693.6px;width:97.69999999999993px;text-align:center;top:148.46px;font-size:8.88px;color:#1e1e1e">3.78E-11</div>
<div class="t" style="left:791.3px;width:116.20000000000005px;text-align:center;top:148.46px;font-size:8.88px;color:#1e1e1e">0.00E+00</div>
<div class="t" style="left:13.4px;width:236.2px;overflow:hidden;top:161.88px;height:12px;font-size:9.16px;color:#1e1e1e;transform:scaleX(1.04)">Zirconium [Non renewable elements]</div>
<div class="t" style="left:259.5px;width:74.0px;text-align:center;top:161.88px;font-size:8.88px;color:#1e1e1e">Mass</div>
<div class="t" style="left:333.5px;width:67.80000000000001px;text-align:center;top:161.88px;font-size:8.88px;color:#1e1e1e">3.69E-15</div>
<div class="t" style="left:401.3px;width:44.099999999999966px;text-align:center;top:161.88px;font-size:8.88px;color:#1e1e1e">kg</div>
<div class="t" style="left:445.4px;width:126.30000000000007px;text-align:center;top:161.88px;font-size:8.88px;color:#1e1e1e;transform:scaleX(0.89);transform-origin:50% 0">FALSE</div>
<div class="t" style="left:571.7px;width:121.89999999999998px;text-align:center;top:161.88px;font-size:8.88px;color:#1e1e1e;transform:scaleX(0.89);transform-origin:50% 0">FALSE</div>
<div class="t" style="left:693.6px;width:97.69999999999993px;text-align:center;top:161.88px;font-size:8.88px;color:#1e1e1e">1.84E-14</div>
<div class="t" style="left:791.3px;width:116.20000000000005px;text-align:center;top:161.88px;font-size:8.88px;color:#1e1e1e">0.00E+00</div>
<div class="t" style="left:13.4px;width:236.2px;overflow:hidden;top:175.29px;height:12px;font-size:9.16px;color:#1e1e1e;transform:scaleX(1.04)">1,2-Dibromoethane [Halogenated organic emissions to fres</div>
<div class="t" style="left:259.5px;width:74.0px;text-align:center;top:175.29px;font-size:8.88px;color:#1e1e1e">Mass</div>
<div class="t" style="left:333.5px;width:67.80000000000001px;text-align:center;top:175.29px;font-size:8.88px;color:#1e1e1e">-1.16E-19</div>
<div class="t" style="left:401.3px;width:44.099999999999966px;text-align:center;top:175.29px;font-size:8.88px;color:#1e1e1e">kg</div>
<div class="t" style="left:445.4px;width:126.30000000000007px;text-align:center;top:175.29px;font-size:8.88px;color:#1e1e1e;transform:scaleX(0.89);transform-origin:50% 0">FALSE</div>
<div class="t" style="left:571.7px;width:121.89999999999998px;text-align:center;top:175.29px;font-size:8.88px;color:#1e1e1e;transform:scaleX(0.89);transform-origin:50% 0">FALSE</div>
<div class="t" style="left:693.6px;width:97.69999999999993px;text-align:center;top:175.29px;font-size:8.88px;color:#1e1e1e">-5.78E-19</div>
<div class="t" style="left:791.3px;width:116.20000000000005px;text-align:center;top:175.29px;font-size:8.88px;color:#1e1e1e">0.00E+00</div>
<div class="t" style="left:13.4px;width:236.2px;overflow:hidden;top:188.71px;height:12px;font-size:9.16px;color:#1e1e1e;transform:scaleX(1.04)">1,3,5-Trimethylbenzene [Group NMVOC to air]</div>
<div class="t" style="left:259.5px;width:74.0px;text-align:center;top:188.71px;font-size:8.88px;color:#1e1e1e">Mass</div>
<div class="t" style="left:333.5px;width:67.80000000000001px;text-align:center;top:188.71px;font-size:8.88px;color:#1e1e1e">1.07E-14</div>
<div class="t" style="left:401.3px;width:44.099999999999966px;text-align:center;top:188.71px;font-size:8.88px;color:#1e1e1e">kg</div>
<div class="t" style="left:445.4px;width:126.30000000000007px;text-align:center;top:188.71px;font-size:8.88px;color:#1e1e1e;transform:scaleX(0.89);transform-origin:50% 0">FALSE</div>
<div class="t" style="left:571.7px;width:121.89999999999998px;text-align:center;top:188.71px;font-size:8.88px;color:#1e1e1e;transform:scaleX(0.89);transform-origin:50% 0">FALSE</div>
<div class="t" style="left:693.6px;width:97.69999999999993px;text-align:center;top:188.71px;font-size:8.88px;color:#1e1e1e">5.33E-14</div>
<div class="t" style="left:791.3px;width:116.20000000000005px;text-align:center;top:188.71px;font-size:8.88px;color:#1e1e1e">0.00E+00</div>
<div class="t" style="left:13.4px;width:236.2px;overflow:hidden;top:202.12px;height:12px;font-size:9.16px;color:#1e1e1e;transform:scaleX(1.04)">1-Butylene (Vinylacetylene) [Group NMVOC to air]</div>
<div class="t" style="left:259.5px;width:74.0px;text-align:center;top:202.12px;font-size:8.88px;color:#1e1e1e">Mass</div>
<div class="t" style="left:333.5px;width:67.80000000000001px;text-align:center;top:202.12px;font-size:8.88px;color:#1e1e1e">6.16E-13</div>
<div class="t" style="left:401.3px;width:44.099999999999966px;text-align:center;top:202.12px;font-size:8.88px;color:#1e1e1e">kg</div>
<div class="t" style="left:445.4px;width:126.30000000000007px;text-align:center;top:202.12px;font-size:8.88px;color:#1e1e1e;transform:scaleX(0.89);transform-origin:50% 0">FALSE</div>
<div class="t" style="left:571.7px;width:121.89999999999998px;text-align:center;top:202.12px;font-size:8.88px;color:#1e1e1e;transform:scaleX(0.89);transform-origin:50% 0">FALSE</div>
<div class="t" style="left:693.6px;width:97.69999999999993px;text-align:center;top:202.12px;font-size:8.88px;color:#1e1e1e">3.08E-12</div>
<div class="t" style="left:791.3px;width:116.20000000000005px;text-align:center;top:202.12px;font-size:8.88px;color:#1e1e1e">0.00E+00</div>
<div class="t" style="left:13.4px;width:236.2px;overflow:hidden;top:215.54px;height:12px;font-size:9.16px;color:#1e1e1e;transform:scaleX(1.04)">1-Methoxy-2-propanol [Group NMVOC to air]</div>
<div class="t" style="left:259.5px;width:74.0px;text-align:center;top:215.54px;font-size:8.88px;color:#1e1e1e">Mass</div>
<div class="t" style="left:333.5px;width:67.80000000000001px;text-align:center;top:215.54px;font-size:8.88px;color:#1e1e1e">1.29E-12</div>
<div class="t" style="left:401.3px;width:44.099999999999966px;text-align:center;top:215.54px;font-size:8.88px;color:#1e1e1e">kg</div>
<div class="t" style="left:445.4px;width:126.30000000000007px;text-align:center;top:215.54px;font-size:8.88px;color:#1e1e1e;transform:scaleX(0.89);transform-origin:50% 0">FALSE</div>
<div class="t" style="left:571.7px;width:121.89999999999998px;text-align:center;top:215.54px;font-size:8.88px;color:#1e1e1e;transform:scaleX(0.89);transform-origin:50% 0">FALSE</div>
<div class="t" style="left:693.6px;width:97.69999999999993px;text-align:center;top:215.54px;font-size:8.88px;color:#1e1e1e">6.47E-12</div>
<div class="t" style="left:791.3px;width:116.20000000000005px;text-align:center;top:215.54px;font-size:8.88px;color:#1e1e1e">0.00E+00</div>
<div class="t" style="left:13.4px;width:236.2px;overflow:hidden;top:228.95px;height:12px;font-size:9.16px;color:#1e1e1e;transform:scaleX(1.04)">1-Pentene [Group NMVOC to air]</div>
<div class="t" style="left:259.5px;width:74.0px;text-align:center;top:228.95px;font-size:8.88px;color:#1e1e1e">Mass</div>
<div class="t" style="left:333.5px;width:67.80000000000001px;text-align:center;top:228.95px;font-size:8.88px;color:#1e1e1e">2.18E-12</div>
<div class="t" style="left:401.3px;width:44.099999999999966px;text-align:center;top:228.95px;font-size:8.88px;color:#1e1e1e">kg</div>
<div class="t" style="left:445.4px;width:126.30000000000007px;text-align:center;top:228.95px;font-size:8.88px;color:#1e1e1e;transform:scaleX(0.89);transform-origin:50% 0">FALSE</div>
<div class="t" style="left:571.7px;width:121.89999999999998px;text-align:center;top:228.95px;font-size:8.88px;color:#1e1e1e;transform:scaleX(0.89);transform-origin:50% 0">FALSE</div>
<div class="t" style="left:693.6px;width:97.69999999999993px;text-align:center;top:228.95px;font-size:8.88px;color:#1e1e1e">1.09E-11</div>
<div class="t" style="left:791.3px;width:116.20000000000005px;text-align:center;top:228.95px;font-size:8.88px;color:#1e1e1e">0.00E+00</div>
<div class="t" style="left:13.4px;width:236.2px;overflow:hidden;top:242.37px;height:12px;font-size:9.16px;color:#1e1e1e;transform:scaleX(1.04)">1-Tetradecane [Group NMVOC to air]</div>
<div class="t" style="left:259.5px;width:74.0px;text-align:center;top:242.37px;font-size:8.88px;color:#1e1e1e">Mass</div>
<div class="t" style="left:333.5px;width:67.80000000000001px;text-align:center;top:242.37px;font-size:8.88px;color:#1e1e1e">1.60E-16</div>
<div class="t" style="left:401.3px;width:44.099999999999966px;text-align:center;top:242.37px;font-size:8.88px;color:#1e1e1e">kg</div>
<div class="t" style="left:445.4px;width:126.30000000000007px;text-align:center;top:242.37px;font-size:8.88px;color:#1e1e1e;transform:scaleX(0.89);transform-origin:50% 0">FALSE</div>
<div class="t" style="left:571.7px;width:121.89999999999998px;text-align:center;top:242.37px;font-size:8.88px;color:#1e1e1e;transform:scaleX(0.89);transform-origin:50% 0">FALSE</div>
<div class="t" style="left:693.6px;width:97.69999999999993px;text-align:center;top:242.37px;font-size:8.88px;color:#1e1e1e">8.01E-16</div>
<div class="t" style="left:791.3px;width:116.20000000000005px;text-align:center;top:242.37px;font-size:8.88px;color:#1e1e1e">0.00E+00</div>
<div class="t" style="left:13.4px;width:236.2px;overflow:hidden;top:255.78px;height:12px;font-size:9.16px;color:#1e1e1e;transform:scaleX(1.04)">1-Tridecane [Group NMVOC to air]</div>
<div class="t" style="left:259.5px;width:74.0px;text-align:center;top:255.78px;font-size:8.88px;color:#1e1e1e">Mass</div>
<div class="t" style="left:333.5px;width:67.80000000000001px;text-align:center;top:255.78px;font-size:8.88px;color:#1e1e1e">4.98E-16</div>
<div class="t" style="left:401.3px;width:44.099999999999966px;text-align:center;top:255.78px;font-size:8.88px;color:#1e1e1e">kg</div>
<div class="t" style="left:445.4px;width:126.30000000000007px;text-align:center;top:255.78px;font-size:8.88px;color:#1e1e1e;transform:scaleX(0.89);transform-origin:50% 0">FALSE</div>
<div class="t" style="left:571.7px;width:121.89999999999998px;text-align:center;top:255.78px;font-size:8.88px;color:#1e1e1e;transform:scaleX(0.89);transform-origin:50% 0">FALSE</div>
<div class="t" style="left:693.6px;width:97.69999999999993px;text-align:center;top:255.78px;font-size:8.88px;color:#1e1e1e">2.49E-15</div>
<div class="t" style="left:791.3px;width:116.20000000000005px;text-align:center;top:255.78px;font-size:8.88px;color:#1e1e1e">0.00E+00</div>
<div class="t" style="left:13.4px;width:236.2px;overflow:hidden;top:269.20px;height:12px;font-size:9.16px;color:#1e1e1e;transform:scaleX(1.04)">1-Undecane [Group NMVOC to air]</div>
<div class="t" style="left:259.5px;width:74.0px;text-align:center;top:269.20px;font-size:8.88px;color:#1e1e1e">Mass</div>
<div class="t" style="left:333.5px;width:67.80000000000001px;text-align:center;top:269.20px;font-size:8.88px;color:#1e1e1e">2.33E-16</div>
<div class="t" style="left:401.3px;width:44.099999999999966px;text-align:center;top:269.20px;font-size:8.88px;color:#1e1e1e">kg</div>
<div class="t" style="left:445.4px;width:126.30000000000007px;text-align:center;top:269.20px;font-size:8.88px;color:#1e1e1e;transform:scaleX(0.89);transform-origin:50% 0">FALSE</div>
<div class="t" style="left:571.7px;width:121.89999999999998px;text-align:center;top:269.20px;font-size:8.88px;color:#1e1e1e;transform:scaleX(0.89);transform-origin:50% 0">FALSE</div>
<div class="t" style="left:693.6px;width:97.69999999999993px;text-align:center;top:269.20px;font-size:8.88px;color:#1e1e1e">1.17E-15</div>
<div class="t" style="left:791.3px;width:116.20000000000005px;text-align:center;top:269.20px;font-size:8.88px;color:#1e1e1e">0.00E+00</div>
<div class="t" style="left:13.4px;width:236.2px;overflow:hidden;top:282.61px;height:12px;font-size:9.16px;color:#1e1e1e;transform:scaleX(1.04)">2,2,4-Trimethylpentane [Group NMVOC to air]</div>
<div class="t" style="left:259.5px;width:74.0px;text-align:center;top:282.61px;font-size:8.88px;color:#1e1e1e">Mass</div>
<div class="t" style="left:333.5px;width:67.80000000000001px;text-align:center;top:282.61px;font-size:8.88px;color:#1e1e1e">3.96E-13</div>
<div class="t" style="left:401.3px;width:44.099999999999966px;text-align:center;top:282.61px;font-size:8.88px;color:#1e1e1e">kg</div>
<div class="t" style="left:445.4px;width:126.30000000000007px;text-align:center;top:282.61px;font-size:8.88px;color:#1e1e1e;transform:scaleX(0.89);transform-origin:50% 0">FALSE</div>
<div class="t" style="left:571.7px;width:121.89999999999998px;text-align:center;top:282.61px;font-size:8.88px;color:#1e1e1e;transform:scaleX(0.89);transform-origin:50% 0">FALSE</div>
<div class="t" style="left:693.6px;width:97.69999999999993px;text-align:center;top:282.61px;font-size:8.88px;color:#1e1e1e">1.98E-12</div>
<div class="t" style="left:791.3px;width:116.20000000000005px;text-align:center;top:282.61px;font-size:8.88px;color:#1e1e1e">0.00E+00</div>
<div class="t" style="left:13.4px;width:236.2px;overflow:hidden;top:296.03px;height:12px;font-size:9.16px;color:#1e1e1e;transform:scaleX(1.04)">2,2-Dimethylbutane [Group NMVOC to air]</div>
<div class="t" style="left:259.5px;width:74.0px;text-align:center;top:296.03px;font-size:8.88px;color:#1e1e1e">Mass</div>
<div class="t" style="left:333.5px;width:67.80000000000001px;text-align:center;top:296.03px;font-size:8.88px;color:#1e1e1e">4.20E-13</div>
<div class="t" style="left:401.3px;width:44.099999999999966px;text-align:center;top:296.03px;font-size:8.88px;color:#1e1e1e">kg</div>
<div class="t" style="left:445.4px;width:126.30000000000007px;text-align:center;top:296.03px;font-size:8.88px;color:#1e1e1e;transform:scaleX(0.89);transform-origin:50% 0">FALSE</div>
<div class="t" style="left:571.7px;width:121.89999999999998px;text-align:center;top:296.03px;font-size:8.88px;color:#1e1e1e;transform:scaleX(0.89);transform-origin:50% 0">FALSE</div>
<div class="t" style="left:693.6px;width:97.69999999999993px;text-align:center;top:296.03px;font-size:8.88px;color:#1e1e1e">2.10E-12</div>
<div class="t" style="left:791.3px;width:116.20000000000005px;text-align:center;top:296.03px;font-size:8.88px;color:#1e1e1e">0.00E+00</div>
<div class="t" style="left:13.4px;width:236.2px;overflow:hidden;top:309.44px;height:12px;font-size:9.16px;color:#1e1e1e;transform:scaleX(1.04)">2,4-Dimethylpentane [Group NMVOC to air]</div>
<div class="t" style="left:259.5px;width:74.0px;text-align:center;top:309.44px;font-size:8.88px;color:#1e1e1e">Mass</div>
<div class="t" style="left:333.5px;width:67.80000000000001px;text-align:center;top:309.44px;font-size:8.88px;color:#1e1e1e">1.65E-13</div>
<div class="t" style="left:401.3px;width:44.099999999999966px;text-align:center;top:309.44px;font-size:8.88px;color:#1e1e1e">kg</div>
<div class="t" style="left:445.4px;width:126.30000000000007px;text-align:center;top:309.44px;font-size:8.88px;color:#1e1e1e;transform:scaleX(0.89);transform-origin:50% 0">FALSE</div>
<div class="t" style="left:571.7px;width:121.89999999999998px;text-align:center;top:309.44px;font-size:8.88px;color:#1e1e1e;transform:scaleX(0.89);transform-origin:50% 0">FALSE</div>
<div class="t" style="left:693.6px;width:97.69999999999993px;text-align:center;top:309.44px;font-size:8.88px;color:#1e1e1e">8.25E-13</div>
<div class="t" style="left:791.3px;width:116.20000000000005px;text-align:center;top:309.44px;font-size:8.88px;color:#1e1e1e">0.00E+00</div>
<div class="t" style="left:13.4px;width:236.2px;overflow:hidden;top:322.86px;height:12px;font-size:9.16px;color:#1e1e1e;transform:scaleX(1.04)">2-Methyl-1-butene [Group NMVOC to air]</div>
<div class="t" style="left:259.5px;width:74.0px;text-align:center;top:322.86px;font-size:8.88px;color:#1e1e1e">Mass</div>
<div class="t" style="left:333.5px;width:67.80000000000001px;text-align:center;top:322.86px;font-size:8.88px;color:#1e1e1e">1.58E-12</div>
<div class="t" style="left:401.3px;width:44.099999999999966px;text-align:center;top:322.86px;font-size:8.88px;color:#1e1e1e">kg</div>
<div class="t" style="left:445.4px;width:126.30000000000007px;text-align:center;top:322.86px;font-size:8.88px;color:#1e1e1e;transform:scaleX(0.89);transform-origin:50% 0">FALSE</div>
<div class="t" style="left:571.7px;width:121.89999999999998px;text-align:center;top:322.86px;font-size:8.88px;color:#1e1e1e;transform:scaleX(0.89);transform-origin:50% 0">FALSE</div>
<div class="t" style="left:693.6px;width:97.69999999999993px;text-align:center;top:322.86px;font-size:8.88px;color:#1e1e1e">7.90E-12</div>
<div class="t" style="left:791.3px;width:116.20000000000005px;text-align:center;top:322.86px;font-size:8.88px;color:#1e1e1e">0.00E+00</div>
<div class="t" style="left:13.4px;width:236.2px;overflow:hidden;top:336.27px;height:12px;font-size:9.16px;color:#1e1e1e;transform:scaleX(1.04)">2-Methylpentane [Group NMVOC to air]</div>
<div class="t" style="left:259.5px;width:74.0px;text-align:center;top:336.27px;font-size:8.88px;color:#1e1e1e">Mass</div>
<div class="t" style="left:333.5px;width:67.80000000000001px;text-align:center;top:336.27px;font-size:8.88px;color:#1e1e1e">2.86E-12</div>
<div class="t" style="left:401.3px;width:44.099999999999966px;text-align:center;top:336.27px;font-size:8.88px;color:#1e1e1e">kg</div>
<div class="t" style="left:445.4px;width:126.30000000000007px;text-align:center;top:336.27px;font-size:8.88px;color:#1e1e1e;transform:scaleX(0.89);transform-origin:50% 0">FALSE</div>
<div class="t" style="left:571.7px;width:121.89999999999998px;text-align:center;top:336.27px;font-size:8.88px;color:#1e1e1e;transform:scaleX(0.89);transform-origin:50% 0">FALSE</div>
<div class="t" style="left:693.6px;width:97.69999999999993px;text-align:center;top:336.27px;font-size:8.88px;color:#1e1e1e">1.43E-11</div>
<div class="t" style="left:791.3px;width:116.20000000000005px;text-align:center;top:336.27px;font-size:8.88px;color:#1e1e1e">0.00E+00</div>
<div class="t" style="left:13.4px;width:236.2px;overflow:hidden;top:349.69px;height:12px;font-size:9.16px;color:#1e1e1e;transform:scaleX(1.04)">3-Methylpentane [Group NMVOC to air]</div>
<div class="t" style="left:259.5px;width:74.0px;text-align:center;top:349.69px;font-size:8.88px;color:#1e1e1e">Mass</div>
<div class="t" style="left:333.5px;width:67.80000000000001px;text-align:center;top:349.69px;font-size:8.88px;color:#1e1e1e">1.43E-12</div>
<div class="t" style="left:401.3px;width:44.099999999999966px;text-align:center;top:349.69px;font-size:8.88px;color:#1e1e1e">kg</div>
<div class="t" style="left:445.4px;width:126.30000000000007px;text-align:center;top:349.69px;font-size:8.88px;color:#1e1e1e;transform:scaleX(0.89);transform-origin:50% 0">FALSE</div>
<div class="t" style="left:571.7px;width:121.89999999999998px;text-align:center;top:349.69px;font-size:8.88px;color:#1e1e1e;transform:scaleX(0.89);transform-origin:50% 0">FALSE</div>
<div class="t" style="left:693.6px;width:97.69999999999993px;text-align:center;top:349.69px;font-size:8.88px;color:#1e1e1e">7.16E-12</div>
<div class="t" style="left:791.3px;width:116.20000000000005px;text-align:center;top:349.69px;font-size:8.88px;color:#1e1e1e">0.00E+00</div>
<div class="t" style="left:13.4px;width:236.2px;overflow:hidden;top:363.10px;height:12px;font-size:9.16px;color:#1e1e1e;transform:scaleX(1.04)">Acenaphthene [Group NMVOC to air]</div>
<div class="t" style="left:259.5px;width:74.0px;text-align:center;top:363.10px;font-size:8.88px;color:#1e1e1e">Mass</div>
<div class="t" style="left:333.5px;width:67.80000000000001px;text-align:center;top:363.10px;font-size:8.88px;color:#1e1e1e">3.31E-12</div>
<div class="t" style="left:401.3px;width:44.099999999999966px;text-align:center;top:363.10px;font-size:8.88px;color:#1e1e1e">kg</div>
<div class="t" style="left:445.4px;width:126.30000000000007px;text-align:center;top:363.10px;font-size:8.88px;color:#1e1e1e;transform:scaleX(0.89);transform-origin:50% 0">FALSE</div>
<div class="t" style="left:571.7px;width:121.89999999999998px;text-align:center;top:363.10px;font-size:8.88px;color:#1e1e1e;transform:scaleX(0.89);transform-origin:50% 0">FALSE</div>
<div class="t" style="left:693.6px;width:97.69999999999993px;text-align:center;top:363.10px;font-size:8.88px;color:#1e1e1e">1.65E-11</div>
<div class="t" style="left:791.3px;width:116.20000000000005px;text-align:center;top:363.10px;font-size:8.88px;color:#1e1e1e">0.00E+00</div>
<div class="t" style="left:13.4px;width:236.2px;overflow:hidden;top:376.52px;height:12px;font-size:9.16px;color:#1e1e1e;transform:scaleX(1.04)">Acenaphthene [Hydrocarbons to fresh water]</div>
<div class="t" style="left:259.5px;width:74.0px;text-align:center;top:376.52px;font-size:8.88px;color:#1e1e1e">Mass</div>
<div class="t" style="left:333.5px;width:67.80000000000001px;text-align:center;top:376.52px;font-size:8.88px;color:#1e1e1e">2.32E-11</div>
<div class="t" style="left:401.3px;width:44.099999999999966px;text-align:center;top:376.52px;font-size:8.88px;color:#1e1e1e">kg</div>
<div class="t" style="left:445.4px;width:126.30000000000007px;text-align:center;top:376.52px;font-size:8.88px;color:#1e1e1e;transform:scaleX(0.89);transform-origin:50% 0">FALSE</div>
<div class="t" style="left:571.7px;width:121.89999999999998px;text-align:center;top:376.52px;font-size:8.88px;color:#1e1e1e;transform:scaleX(0.89);transform-origin:50% 0">FALSE</div>
<div class="t" style="left:693.6px;width:97.69999999999993px;text-align:center;top:376.52px;font-size:8.88px;color:#1e1e1e">1.16E-10</div>
<div class="t" style="left:791.3px;width:116.20000000000005px;text-align:center;top:376.52px;font-size:8.88px;color:#1e1e1e">0.00E+00</div>
<div class="t" style="left:13.4px;width:236.2px;overflow:hidden;top:389.93px;height:12px;font-size:9.16px;color:#1e1e1e;transform:scaleX(1.04)">Acenaphthene [Hydrocarbons to sea water]</div>
<div class="t" style="left:259.5px;width:74.0px;text-align:center;top:389.93px;font-size:8.88px;color:#1e1e1e">Mass</div>
<div class="t" style="left:333.5px;width:67.80000000000001px;text-align:center;top:389.93px;font-size:8.88px;color:#1e1e1e">6.52E-12</div>
<div class="t" style="left:401.3px;width:44.099999999999966px;text-align:center;top:389.93px;font-size:8.88px;color:#1e1e1e">kg</div>
<div class="t" style="left:445.4px;width:126.30000000000007px;text-align:center;top:389.93px;font-size:8.88px;color:#1e1e1e;transform:scaleX(0.89);transform-origin:50% 0">FALSE</div>
<div class="t" style="left:571.7px;width:121.89999999999998px;text-align:center;top:389.93px;font-size:8.88px;color:#1e1e1e;transform:scaleX(0.89);transform-origin:50% 0">FALSE</div>
<div class="t" style="left:693.6px;width:97.69999999999993px;text-align:center;top:389.93px;font-size:8.88px;color:#1e1e1e">3.26E-11</div>
<div class="t" style="left:791.3px;width:116.20000000000005px;text-align:center;top:389.93px;font-size:8.88px;color:#1e1e1e">0.00E+00</div>
<div class="t" style="left:13.4px;width:236.2px;overflow:hidden;top:403.35px;height:12px;font-size:9.16px;color:#1e1e1e;transform:scaleX(1.04)">Acenaphthylene [Group PAH to air]</div>
<div class="t" style="left:259.5px;width:74.0px;text-align:center;top:403.35px;font-size:8.88px;color:#1e1e1e">Mass</div>
<div class="t" style="left:333.5px;width:67.80000000000001px;text-align:center;top:403.35px;font-size:8.88px;color:#1e1e1e">6.52E-12</div>
<div class="t" style="left:401.3px;width:44.099999999999966px;text-align:center;top:403.35px;font-size:8.88px;color:#1e1e1e">kg</div>
<div class="t" style="left:445.4px;width:126.30000000000007px;text-align:center;top:403.35px;font-size:8.88px;color:#1e1e1e;transform:scaleX(0.89);transform-origin:50% 0">FALSE</div>
<div class="t" style="left:571.7px;width:121.89999999999998px;text-align:center;top:403.35px;font-size:8.88px;color:#1e1e1e;transform:scaleX(0.89);transform-origin:50% 0">FALSE</div>
<div class="t" style="left:693.6px;width:97.69999999999993px;text-align:center;top:403.35px;font-size:8.88px;color:#1e1e1e">3.26E-11</div>
<div class="t" style="left:791.3px;width:116.20000000000005px;text-align:center;top:403.35px;font-size:8.88px;color:#1e1e1e">0.00E+00</div>
<div class="t" style="left:13.4px;width:236.2px;overflow:hidden;top:416.76px;height:12px;font-size:9.16px;color:#1e1e1e;transform:scaleX(1.04)">Acenaphthylene [Hydrocarbons to fresh water]</div>
<div class="t" style="left:259.5px;width:74.0px;text-align:center;top:416.76px;font-size:8.88px;color:#1e1e1e">Mass</div>
<div class="t" style="left:333.5px;width:67.80000000000001px;text-align:center;top:416.76px;font-size:8.88px;color:#1e1e1e">9.95E-12</div>
<div class="t" style="left:401.3px;width:44.099999999999966px;text-align:center;top:416.76px;font-size:8.88px;color:#1e1e1e">kg</div>
<div class="t" style="left:445.4px;width:126.30000000000007px;text-align:center;top:416.76px;font-size:8.88px;color:#1e1e1e;transform:scaleX(0.89);transform-origin:50% 0">FALSE</div>
<div class="t" style="left:571.7px;width:121.89999999999998px;text-align:center;top:416.76px;font-size:8.88px;color:#1e1e1e;transform:scaleX(0.89);transform-origin:50% 0">FALSE</div>
<div class="t" style="left:693.6px;width:97.69999999999993px;text-align:center;top:416.76px;font-size:8.88px;color:#1e1e1e">4.97E-11</div>
<div class="t" style="left:791.3px;width:116.20000000000005px;text-align:center;top:416.76px;font-size:8.88px;color:#1e1e1e">0.00E+00</div>
<div class="t" style="left:13.4px;width:236.2px;overflow:hidden;top:430.18px;height:12px;font-size:9.16px;color:#1e1e1e;transform:scaleX(1.04)">Acenaphthylene [Hydrocarbons to sea water]</div>
<div class="t" style="left:259.5px;width:74.0px;text-align:center;top:430.18px;font-size:8.88px;color:#1e1e1e">Mass</div>
<div class="t" style="left:333.5px;width:67.80000000000001px;text-align:center;top:430.18px;font-size:8.88px;color:#1e1e1e">2.80E-12</div>
<div class="t" style="left:401.3px;width:44.099999999999966px;text-align:center;top:430.18px;font-size:8.88px;color:#1e1e1e">kg</div>
<div class="t" style="left:445.4px;width:126.30000000000007px;text-align:center;top:430.18px;font-size:8.88px;color:#1e1e1e;transform:scaleX(0.89);transform-origin:50% 0">FALSE</div>
<div class="t" style="left:571.7px;width:121.89999999999998px;text-align:center;top:430.18px;font-size:8.88px;color:#1e1e1e;transform:scaleX(0.89);transform-origin:50% 0">FALSE</div>
<div class="t" style="left:693.6px;width:97.69999999999993px;text-align:center;top:430.18px;font-size:8.88px;color:#1e1e1e">1.40E-11</div>
<div class="t" style="left:791.3px;width:116.20000000000005px;text-align:center;top:430.18px;font-size:8.88px;color:#1e1e1e">0.00E+00</div>
<div class="t" style="left:13.4px;width:236.2px;overflow:hidden;top:443.59px;height:12px;font-size:9.16px;color:#1e1e1e;transform:scaleX(1.04)">Acetaldehyde (Ethanal) [Group NMVOC to air]</div>
<div class="t" style="left:259.5px;width:74.0px;text-align:center;top:443.59px;font-size:8.88px;color:#1e1e1e">Mass</div>
<div class="t" style="left:333.5px;width:67.80000000000001px;text-align:center;top:443.59px;font-size:8.88px;color:#1e1e1e">8.27E-10</div>
<div class="t" style="left:401.3px;width:44.099999999999966px;text-align:center;top:443.59px;font-size:8.88px;color:#1e1e1e">kg</div>
<div class="t" style="left:445.4px;width:126.30000000000007px;text-align:center;top:443.59px;font-size:8.88px;color:#1e1e1e;transform:scaleX(0.89);transform-origin:50% 0">FALSE</div>
<div class="t" style="left:571.7px;width:121.89999999999998px;text-align:center;top:443.59px;font-size:8.88px;color:#1e1e1e;transform:scaleX(0.89);transform-origin:50% 0">FALSE</div>
<div class="t" style="left:693.6px;width:97.69999999999993px;text-align:center;top:443.59px;font-size:8.88px;color:#1e1e1e">4.14E-09</div>
<div class="t" style="left:791.3px;width:116.20000000000005px;text-align:center;top:443.59px;font-size:8.88px;color:#1e1e1e">0.00E+00</div>
<div class="t" style="left:13.4px;width:236.2px;overflow:hidden;top:457.01px;height:12px;font-size:9.16px;color:#1e1e1e;transform:scaleX(1.04)">Acetic acid [Group NMVOC to air]</div>
<div class="t" style="left:259.5px;width:74.0px;text-align:center;top:457.01px;font-size:8.88px;color:#1e1e1e">Mass</div>
<div class="t" style="left:333.5px;width:67.80000000000001px;text-align:center;top:457.01px;font-size:8.88px;color:#1e1e1e">3.08E-08</div>
<div class="t" style="left:401.3px;width:44.099999999999966px;text-align:center;top:457.01px;font-size:8.88px;color:#1e1e1e">kg</div>
<div class="t" style="left:445.4px;width:126.30000000000007px;text-align:center;top:457.01px;font-size:8.88px;color:#1e1e1e;transform:scaleX(0.89);transform-origin:50% 0">FALSE</div>
<div class="t" style="left:571.7px;width:121.89999999999998px;text-align:center;top:457.01px;font-size:8.88px;color:#1e1e1e;transform:scaleX(0.89);transform-origin:50% 0">FALSE</div>
<div class="t" style="left:693.6px;width:97.69999999999993px;text-align:center;top:457.01px;font-size:8.88px;color:#1e1e1e">1.54E-07</div>
<div class="t" style="left:791.3px;width:116.20000000000005px;text-align:center;top:457.01px;font-size:8.88px;color:#1e1e1e">0.00E+00</div>
<div class="t" style="left:13.4px;width:236.2px;overflow:hidden;top:470.42px;height:12px;font-size:9.16px;color:#1e1e1e;transform:scaleX(1.04)">Acetic acid [Hydrocarbons to fresh water]</div>
<div class="t" style="left:259.5px;width:74.0px;text-align:center;top:470.42px;font-size:8.88px;color:#1e1e1e">Mass</div>
<div class="t" style="left:333.5px;width:67.80000000000001px;text-align:center;top:470.42px;font-size:8.88px;color:#1e1e1e">9.92E-11</div>
<div class="t" style="left:401.3px;width:44.099999999999966px;text-align:center;top:470.42px;font-size:8.88px;color:#1e1e1e">kg</div>
<div class="t" style="left:445.4px;width:126.30000000000007px;text-align:center;top:470.42px;font-size:8.88px;color:#1e1e1e;transform:scaleX(0.89);transform-origin:50% 0">FALSE</div>
<div class="t" style="left:571.7px;width:121.89999999999998px;text-align:center;top:470.42px;font-size:8.88px;color:#1e1e1e;transform:scaleX(0.89);transform-origin:50% 0">FALSE</div>
<div class="t" style="left:693.6px;width:97.69999999999993px;text-align:center;top:470.42px;font-size:8.88px;color:#1e1e1e">4.96E-10</div>
<div class="t" style="left:791.3px;width:116.20000000000005px;text-align:center;top:470.42px;font-size:8.88px;color:#1e1e1e">0.00E+00</div>
<div class="t" style="left:13.4px;width:236.2px;overflow:hidden;top:483.84px;height:12px;font-size:9.16px;color:#1e1e1e;transform:scaleX(1.04)">Acetic acid [Hydrocarbons to sea water]</div>
<div class="t" style="left:259.5px;width:74.0px;text-align:center;top:483.84px;font-size:8.88px;color:#1e1e1e">Mass</div>
<div class="t" style="left:333.5px;width:67.80000000000001px;text-align:center;top:483.84px;font-size:8.88px;color:#1e1e1e">-1.53E-15</div>
<div class="t" style="left:401.3px;width:44.099999999999966px;text-align:center;top:483.84px;font-size:8.88px;color:#1e1e1e">kg</div>
<div class="t" style="left:445.4px;width:126.30000000000007px;text-align:center;top:483.84px;font-size:8.88px;color:#1e1e1e;transform:scaleX(0.89);transform-origin:50% 0">FALSE</div>
<div class="t" style="left:571.7px;width:121.89999999999998px;text-align:center;top:483.84px;font-size:8.88px;color:#1e1e1e;transform:scaleX(0.89);transform-origin:50% 0">FALSE</div>
<div class="t" style="left:693.6px;width:97.69999999999993px;text-align:center;top:483.84px;font-size:8.88px;color:#1e1e1e">-7.66E-15</div>
<div class="t" style="left:791.3px;width:116.20000000000005px;text-align:center;top:483.84px;font-size:8.88px;color:#1e1e1e">0.00E+00</div>
<div class="t" style="left:13.4px;width:236.2px;overflow:hidden;top:497.25px;height:12px;font-size:9.16px;color:#1e1e1e;transform:scaleX(1.04)">Acetic acid [Organic emissions to industrial soil]</div>
<div class="t" style="left:259.5px;width:74.0px;text-align:center;top:497.25px;font-size:8.88px;color:#1e1e1e">Mass</div>
<div class="t" style="left:333.5px;width:67.80000000000001px;text-align:center;top:497.25px;font-size:8.88px;color:#1e1e1e">6.29E-12</div>
<div class="t" style="left:401.3px;width:44.099999999999966px;text-align:center;top:497.25px;font-size:8.88px;color:#1e1e1e">kg</div>
<div class="t" style="left:445.4px;width:126.30000000000007px;text-align:center;top:497.25px;font-size:8.88px;color:#1e1e1e;transform:scaleX(0.89);transform-origin:50% 0">FALSE</div>
<div class="t" style="left:571.7px;width:121.89999999999998px;text-align:center;top:497.25px;font-size:8.88px;color:#1e1e1e;transform:scaleX(0.89);transform-origin:50% 0">FALSE</div>
<div class="t" style="left:693.6px;width:97.69999999999993px;text-align:center;top:497.25px;font-size:8.88px;color:#1e1e1e">3.14E-11</div>
<div class="t" style="left:791.3px;width:116.20000000000005px;text-align:center;top:497.25px;font-size:8.88px;color:#1e1e1e">0.00E+00</div>
<div class="t" style="left:13.4px;width:236.2px;overflow:hidden;top:510.67px;height:12px;font-size:9.16px;color:#1e1e1e;transform:scaleX(1.04)">Acetochlor [Pesticides to air]</div>
<div class="t" style="left:259.5px;width:74.0px;text-align:center;top:510.67px;font-size:8.88px;color:#1e1e1e">Mass</div>
<div class="t" style="left:333.5px;width:67.80000000000001px;text-align:center;top:510.67px;font-size:8.88px;color:#1e1e1e">4.23E-20</div>
<div class="t" style="left:401.3px;width:44.099999999999966px;text-align:center;top:510.67px;font-size:8.88px;color:#1e1e1e">kg</div>
<div class="t" style="left:445.4px;width:126.30000000000007px;text-align:center;top:510.67px;font-size:8.88px;color:#1e1e1e;transform:scaleX(0.89);transform-origin:50% 0">FALSE</div>
<div class="t" style="left:571.7px;width:121.89999999999998px;text-align:center;top:510.67px;font-size:8.88px;color:#1e1e1e;transform:scaleX(0.89);transform-origin:50% 0">FALSE</div>
<div class="t" style="left:693.6px;width:97.69999999999993px;text-align:center;top:510.67px;font-size:8.88px;color:#1e1e1e">2.11E-19</div>
<div class="t" style="left:791.3px;width:116.20000000000005px;text-align:center;top:510.67px;font-size:8.88px;color:#1e1e1e">0.00E+00</div>
<div class="t" style="left:13.4px;width:236.2px;overflow:hidden;top:524.08px;height:12px;font-size:9.16px;color:#1e1e1e;transform:scaleX(1.04)">Acetochlor [Pesticides to fresh water]</div>
<div class="t" style="left:259.5px;width:74.0px;text-align:center;top:524.08px;font-size:8.88px;color:#1e1e1e">Mass</div>
<div class="t" style="left:333.5px;width:67.80000000000001px;text-align:center;top:524.08px;font-size:8.88px;color:#1e1e1e">2.64E-21</div>
<div class="t" style="left:401.3px;width:44.099999999999966px;text-align:center;top:524.08px;font-size:8.88px;color:#1e1e1e">kg</div>
<div class="t" style="left:445.4px;width:126.30000000000007px;text-align:center;top:524.08px;font-size:8.88px;color:#1e1e1e;transform:scaleX(0.89);transform-origin:50% 0">FALSE</div>
<div class="t" style="left:571.7px;width:121.89999999999998px;text-align:center;top:524.08px;font-size:8.88px;color:#1e1e1e;transform:scaleX(0.89);transform-origin:50% 0">FALSE</div>
<div class="t" style="left:693.6px;width:97.69999999999993px;text-align:center;top:524.08px;font-size:8.88px;color:#1e1e1e">1.32E-20</div>
<div class="t" style="left:791.3px;width:116.20000000000005px;text-align:center;top:524.08px;font-size:8.88px;color:#1e1e1e">0.00E+00</div>
<div class="t" style="left:13.4px;width:236.2px;overflow:hidden;top:537.50px;height:12px;font-size:9.16px;color:#1e1e1e;transform:scaleX(1.04)">Acetone (dimethylcetone) [Group NMVOC to air]</div>
<div class="t" style="left:259.5px;width:74.0px;text-align:center;top:537.50px;font-size:8.88px;color:#1e1e1e">Mass</div>
<div class="t" style="left:333.5px;width:67.80000000000001px;text-align:center;top:537.50px;font-size:8.88px;color:#1e1e1e">6.21E-10</div>
<div class="t" style="left:401.3px;width:44.099999999999966px;text-align:center;top:537.50px;font-size:8.88px;color:#1e1e1e">kg</div>
<div class="t" style="left:445.4px;width:126.30000000000007px;text-align:center;top:537.50px;font-size:8.88px;color:#1e1e1e;transform:scaleX(0.89);transform-origin:50% 0">FALSE</div>
<div class="t" style="left:571.7px;width:121.89999999999998px;text-align:center;top:537.50px;font-size:8.88px;color:#1e1e1e;transform:scaleX(0.89);transform-origin:50% 0">FALSE</div>
<div class="t" style="left:693.6px;width:97.69999999999993px;text-align:center;top:537.50px;font-size:8.88px;color:#1e1e1e">3.11E-09</div>
<div class="t" style="left:791.3px;width:116.20000000000005px;text-align:center;top:537.50px;font-size:8.88px;color:#1e1e1e">0.00E+00</div>
<div class="t" style="left:13.4px;width:236.2px;overflow:hidden;top:550.91px;height:12px;font-size:9.16px;color:#1e1e1e;transform:scaleX(1.04)">Acid (calculated as H+) [Inorganic emissions to fresh water</div>
<div class="t" style="left:259.5px;width:74.0px;text-align:center;top:550.91px;font-size:8.88px;color:#1e1e1e">Mass</div>
<div class="t" style="left:333.5px;width:67.80000000000001px;text-align:center;top:550.91px;font-size:8.88px;color:#1e1e1e">4.90E-10</div>
<div class="t" style="left:401.3px;width:44.099999999999966px;text-align:center;top:550.91px;font-size:8.88px;color:#1e1e1e">kg</div>
<div class="t" style="left:445.4px;width:126.30000000000007px;text-align:center;top:550.91px;font-size:8.88px;color:#1e1e1e;transform:scaleX(0.89);transform-origin:50% 0">FALSE</div>
<div class="t" style="left:571.7px;width:121.89999999999998px;text-align:center;top:550.91px;font-size:8.88px;color:#1e1e1e;transform:scaleX(0.89);transform-origin:50% 0">FALSE</div>
<div class="t" style="left:693.6px;width:97.69999999999993px;text-align:center;top:550.91px;font-size:8.88px;color:#1e1e1e">2.45E-09</div>
<div class="t" style="left:791.3px;width:116.20000000000005px;text-align:center;top:550.91px;font-size:8.88px;color:#1e1e1e">0.00E+00</div>
<div class="t" style="left:13.4px;width:236.2px;overflow:hidden;top:564.33px;height:12px;font-size:9.16px;color:#1e1e1e;transform:scaleX(1.04)">Acrolein [Group NMVOC to air]</div>
<div class="t" style="left:259.5px;width:74.0px;text-align:center;top:564.33px;font-size:8.88px;color:#1e1e1e">Mass</div>
<div class="t" style="left:333.5px;width:67.80000000000001px;text-align:center;top:564.33px;font-size:8.88px;color:#1e1e1e">5.57E-12</div>
<div class="t" style="left:401.3px;width:44.099999999999966px;text-align:center;top:564.33px;font-size:8.88px;color:#1e1e1e">kg</div>
<div class="t" style="left:445.4px;width:126.30000000000007px;text-align:center;top:564.33px;font-size:8.88px;color:#1e1e1e;transform:scaleX(0.89);transform-origin:50% 0">FALSE</div>
<div class="t" style="left:571.7px;width:121.89999999999998px;text-align:center;top:564.33px;font-size:8.88px;color:#1e1e1e;transform:scaleX(0.89);transform-origin:50% 0">FALSE</div>
<div class="t" style="left:693.6px;width:97.69999999999993px;text-align:center;top:564.33px;font-size:8.88px;color:#1e1e1e">2.78E-11</div>
<div class="t" style="left:791.3px;width:116.20000000000005px;text-align:center;top:564.33px;font-size:8.88px;color:#1e1e1e">0.00E+00</div>
<div class="t" style="left:13.4px;width:236.2px;overflow:hidden;top:577.74px;height:12px;font-size:9.16px;color:#1e1e1e;transform:scaleX(1.04)">Acrylonitrile [Group NMVOC to air]</div>
<div class="t" style="left:259.5px;width:74.0px;text-align:center;top:577.74px;font-size:8.88px;color:#1e1e1e">Mass</div>
<div class="t" style="left:333.5px;width:67.80000000000001px;text-align:center;top:577.74px;font-size:8.88px;color:#1e1e1e">6.30E-16</div>
<div class="t" style="left:401.3px;width:44.099999999999966px;text-align:center;top:577.74px;font-size:8.88px;color:#1e1e1e">kg</div>
<div class="t" style="left:445.4px;width:126.30000000000007px;text-align:center;top:577.74px;font-size:8.88px;color:#1e1e1e;transform:scaleX(0.89);transform-origin:50% 0">FALSE</div>
<div class="t" style="left:571.7px;width:121.89999999999998px;text-align:center;top:577.74px;font-size:8.88px;color:#1e1e1e;transform:scaleX(0.89);transform-origin:50% 0">FALSE</div>
<div class="t" style="left:693.6px;width:97.69999999999993px;text-align:center;top:577.74px;font-size:8.88px;color:#1e1e1e">3.15E-15</div>
<div class="t" style="left:791.3px;width:116.20000000000005px;text-align:center;top:577.74px;font-size:8.88px;color:#1e1e1e">0.00E+00</div>
<div class="t" style="left:13.4px;width:236.2px;overflow:hidden;top:591.16px;height:12px;font-size:9.16px;color:#1e1e1e;transform:scaleX(1.04)">Acrylonitrile [Hydrocarbons to fresh water]</div>
<div class="t" style="left:259.5px;width:74.0px;text-align:center;top:591.16px;font-size:8.88px;color:#1e1e1e">Mass</div>
<div class="t" style="left:333.5px;width:67.80000000000001px;text-align:center;top:591.16px;font-size:8.88px;color:#1e1e1e">-2.96E-17</div>
<div class="t" style="left:401.3px;width:44.099999999999966px;text-align:center;top:591.16px;font-size:8.88px;color:#1e1e1e">kg</div>
<div class="t" style="left:445.4px;width:126.30000000000007px;text-align:center;top:591.16px;font-size:8.88px;color:#1e1e1e;transform:scaleX(0.89);transform-origin:50% 0">FALSE</div>
<div class="t" style="left:571.7px;width:121.89999999999998px;text-align:center;top:591.16px;font-size:8.88px;color:#1e1e1e;transform:scaleX(0.89);transform-origin:50% 0">FALSE</div>
<div class="t" style="left:693.6px;width:97.69999999999993px;text-align:center;top:591.16px;font-size:8.88px;color:#1e1e1e">-1.48E-16</div>
<div class="t" style="left:791.3px;width:116.20000000000005px;text-align:center;top:591.16px;font-size:8.88px;color:#1e1e1e">0.00E+00</div>
<div class="t" style="left:13.4px;width:236.2px;overflow:hidden;top:604.57px;height:12px;font-size:9.16px;color:#1e1e1e;transform:scaleX(1.04)">Adsorbable organic halogen compounds (AOX) [Analytical</div>
<div class="t" style="left:259.5px;width:74.0px;text-align:center;top:604.57px;font-size:8.88px;color:#1e1e1e">Mass</div>
<div class="t" style="left:333.5px;width:67.80000000000001px;text-align:center;top:604.57px;font-size:8.88px;color:#1e1e1e">0.000155263</div>
<div class="t" style="left:401.3px;width:44.099999999999966px;text-align:center;top:604.57px;font-size:8.88px;color:#1e1e1e">kg</div>
<div class="t" style="left:445.4px;width:126.30000000000007px;text-align:center;top:604.57px;font-size:8.88px;color:#1e1e1e;transform:scaleX(0.89);transform-origin:50% 0">FALSE</div>
<div class="t" style="left:571.7px;width:121.89999999999998px;text-align:center;top:604.57px;font-size:8.88px;color:#1e1e1e;transform:scaleX(0.89);transform-origin:50% 0">FALSE</div>
<div class="t" style="left:693.6px;width:97.69999999999993px;text-align:center;top:604.57px;font-size:8.88px;color:#1e1e1e">7.76E-04</div>
<div class="t" style="left:791.3px;width:116.20000000000005px;text-align:center;top:604.57px;font-size:8.88px;color:#1e1e1e">0.00E+00</div>
<div class="t" style="left:13.4px;width:236.2px;overflow:hidden;top:617.99px;height:12px;font-size:9.16px;color:#1e1e1e;transform:scaleX(1.04)">Adsorbable organic halogen compounds (AOX) [Analytical</div>
<div class="t" style="left:259.5px;width:74.0px;text-align:center;top:617.99px;font-size:8.88px;color:#1e1e1e">Mass</div>
<div class="t" style="left:333.5px;width:67.80000000000001px;text-align:center;top:617.99px;font-size:8.88px;color:#1e1e1e">9.28E-15</div>
<div class="t" style="left:401.3px;width:44.099999999999966px;text-align:center;top:617.99px;font-size:8.88px;color:#1e1e1e">kg</div>
<div class="t" style="left:445.4px;width:126.30000000000007px;text-align:center;top:617.99px;font-size:8.88px;color:#1e1e1e;transform:scaleX(0.89);transform-origin:50% 0">FALSE</div>
<div class="t" style="left:571.7px;width:121.89999999999998px;text-align:center;top:617.99px;font-size:8.88px;color:#1e1e1e;transform:scaleX(0.89);transform-origin:50% 0">FALSE</div>
<div class="t" style="left:693.6px;width:97.69999999999993px;text-align:center;top:617.99px;font-size:8.88px;color:#1e1e1e">4.64E-14</div>
<div class="t" style="left:791.3px;width:116.20000000000005px;text-align:center;top:617.99px;font-size:8.88px;color:#1e1e1e">0.00E+00</div>
<div class="t" style="left:13.4px;width:236.2px;overflow:hidden;top:631.40px;height:12px;font-size:9.16px;color:#1e1e1e;transform:scaleX(1.04)">Agriculture [Occupation]</div>
<div class="t" style="left:259.5px;width:74.0px;text-align:center;top:631.40px;font-size:8.88px;color:#1e1e1e">Areatime</div>
<div class="t" style="left:333.5px;width:67.80000000000001px;text-align:center;top:631.40px;font-size:8.88px;color:#1e1e1e">2.72E-18</div>
<div class="t" style="left:401.3px;width:44.099999999999966px;text-align:center;top:631.40px;font-size:8.88px;color:#1e1e1e">m2*yr</div>
<div class="t" style="left:445.4px;width:126.30000000000007px;text-align:center;top:631.40px;font-size:8.88px;color:#1e1e1e;transform:scaleX(0.89);transform-origin:50% 0">FALSE</div>
<div class="t" style="left:571.7px;width:121.89999999999998px;text-align:center;top:631.40px;font-size:8.88px;color:#1e1e1e;transform:scaleX(0.89);transform-origin:50% 0">FALSE</div>
<div class="t" style="left:693.6px;width:97.69999999999993px;text-align:center;top:631.40px;font-size:8.88px;color:#1e1e1e">1.36E-17</div>
<div class="t" style="left:791.3px;width:116.20000000000005px;text-align:center;top:631.40px;font-size:8.88px;color:#1e1e1e">0.00E+00</div>
<div class="t" style="left:13.4px;width:236.2px;overflow:hidden;top:644.82px;height:12px;font-size:9.16px;color:#1e1e1e;transform:scaleX(1.04)">Air [Renewable resources]</div>
<div class="t" style="left:259.5px;width:74.0px;text-align:center;top:644.82px;font-size:8.88px;color:#1e1e1e">Mass</div>
<div class="t" style="left:333.5px;width:67.80000000000001px;text-align:center;top:644.82px;font-size:8.88px;color:#1e1e1e">0.660511215</div>
<div class="t" style="left:401.3px;width:44.099999999999966px;text-align:center;top:644.82px;font-size:8.88px;color:#1e1e1e">kg</div>
<div class="t" style="left:445.4px;width:126.30000000000007px;text-align:center;top:644.82px;font-size:8.88px;color:#1e1e1e;transform:scaleX(0.89);transform-origin:50% 0">FALSE</div>
<div class="t" style="left:571.7px;width:121.89999999999998px;text-align:center;top:644.82px;font-size:8.88px;color:#1e1e1e;transform:scaleX(0.89);transform-origin:50% 0">FALSE</div>
<div class="t" style="left:693.6px;width:97.69999999999993px;text-align:center;top:644.82px;font-size:8.88px;color:#1e1e1e">3.30E+00</div>
<div class="t" style="left:791.3px;width:116.20000000000005px;text-align:center;top:644.82px;font-size:8.88px;color:#1e1e1e">0.00E+00</div>
<div class="t" style="left:13.4px;width:236.2px;overflow:hidden;top:658.23px;height:12px;font-size:9.16px;color:#1e1e1e;transform:scaleX(1.04)">Alachlor [Pesticides to fresh water]</div>
<div class="t" style="left:259.5px;width:74.0px;text-align:center;top:658.23px;font-size:8.88px;color:#1e1e1e">Mass</div>
<div class="t" style="left:333.5px;width:67.80000000000001px;text-align:center;top:658.23px;font-size:8.88px;color:#1e1e1e">2.44E-10</div>
<div class="t" style="left:401.3px;width:44.099999999999966px;text-align:center;top:658.23px;font-size:8.88px;color:#1e1e1e">kg</div>
<div class="t" style="left:445.4px;width:126.30000000000007px;text-align:center;top:658.23px;font-size:8.88px;color:#1e1e1e;transform:scaleX(0.89);transform-origin:50% 0">FALSE</div>
<div class="t" style="left:571.7px;width:121.89999999999998px;text-align:center;top:658.23px;font-size:8.88px;color:#1e1e1e;transform:scaleX(0.89);transform-origin:50% 0">FALSE</div>
<div class="t" style="left:693.6px;width:97.69999999999993px;text-align:center;top:658.23px;font-size:8.88px;color:#1e1e1e">1.22E-09</div>
<div class="t" style="left:791.3px;width:116.20000000000005px;text-align:center;top:658.23px;font-size:8.88px;color:#1e1e1e">0.00E+00</div>
<div class="t" style="left:13.4px;width:236.2px;overflow:hidden;top:671.65px;height:12px;font-size:9.16px;color:#1e1e1e;transform:scaleX(1.04)">Aldehyde (unspecified) [Group NMVOC to air]</div>
<div class="t" style="left:259.5px;width:74.0px;text-align:center;top:671.65px;font-size:8.88px;color:#1e1e1e">Mass</div>
<div class="t" style="left:333.5px;width:67.80000000000001px;text-align:center;top:671.65px;font-size:8.88px;color:#1e1e1e">1.12E-10</div>
<div class="t" style="left:401.3px;width:44.099999999999966px;text-align:center;top:671.65px;font-size:8.88px;color:#1e1e1e">kg</div>
<div class="t" style="left:445.4px;width:126.30000000000007px;text-align:center;top:671.65px;font-size:8.88px;color:#1e1e1e;transform:scaleX(0.89);transform-origin:50% 0">FALSE</div>
<div class="t" style="left:571.7px;width:121.89999999999998px;text-align:center;top:671.65px;font-size:8.88px;color:#1e1e1e;transform:scaleX(0.89);transform-origin:50% 0">FALSE</div>
<div class="t" style="left:693.6px;width:97.69999999999993px;text-align:center;top:671.65px;font-size:8.88px;color:#1e1e1e">5.62E-10</div>
<div class="t" style="left:791.3px;width:116.20000000000005px;text-align:center;top:671.65px;font-size:8.88px;color:#1e1e1e">0.00E+00</div>
<div class="t" style="left:13.4px;width:236.2px;overflow:hidden;top:685.06px;height:12px;font-size:9.16px;color:#1e1e1e;transform:scaleX(1.04)">Alkane (unspecified) [Group NMVOC to air]</div>
<div class="t" style="left:259.5px;width:74.0px;text-align:center;top:685.06px;font-size:8.88px;color:#1e1e1e">Mass</div>
<div class="t" style="left:333.5px;width:67.80000000000001px;text-align:center;top:685.06px;font-size:8.88px;color:#1e1e1e">2.39E-08</div>
<div class="t" style="left:401.3px;width:44.099999999999966px;text-align:center;top:685.06px;font-size:8.88px;color:#1e1e1e">kg</div>
<div class="t" style="left:445.4px;width:126.30000000000007px;text-align:center;top:685.06px;font-size:8.88px;color:#1e1e1e;transform:scaleX(0.89);transform-origin:50% 0">FALSE</div>
<div class="t" style="left:571.7px;width:121.89999999999998px;text-align:center;top:685.06px;font-size:8.88px;color:#1e1e1e;transform:scaleX(0.89);transform-origin:50% 0">FALSE</div>
<div class="t" style="left:693.6px;width:97.69999999999993px;text-align:center;top:685.06px;font-size:8.88px;color:#1e1e1e">1.19E-07</div>
<div class="t" style="left:791.3px;width:116.20000000000005px;text-align:center;top:685.06px;font-size:8.88px;color:#1e1e1e">0.00E+00</div>
<div class="t" style="left:13.4px;width:236.2px;overflow:hidden;top:698.48px;height:12px;font-size:9.16px;color:#1e1e1e;transform:scaleX(1.04)">Alkane (unspecified) [Hydrocarbons to fresh water]</div>
<div class="t" style="left:259.5px;width:74.0px;text-align:center;top:698.48px;font-size:8.88px;color:#1e1e1e">Mass</div>
<div class="t" style="left:333.5px;width:67.80000000000001px;text-align:center;top:698.48px;font-size:8.88px;color:#1e1e1e">3.38E-18</div>
<div class="t" style="left:401.3px;width:44.099999999999966px;text-align:center;top:698.48px;font-size:8.88px;color:#1e1e1e">kg</div>
<div class="t" style="left:445.4px;width:126.30000000000007px;text-align:center;top:698.48px;font-size:8.88px;color:#1e1e1e;transform:scaleX(0.89);transform-origin:50% 0">FALSE</div>
<div class="t" style="left:571.7px;width:121.89999999999998px;text-align:center;top:698.48px;font-size:8.88px;color:#1e1e1e;transform:scaleX(0.89);transform-origin:50% 0">FALSE</div>
<div class="t" style="left:693.6px;width:97.69999999999993px;text-align:center;top:698.48px;font-size:8.88px;color:#1e1e1e">1.69E-17</div>
<div class="t" style="left:791.3px;width:116.20000000000005px;text-align:center;top:698.48px;font-size:8.88px;color:#1e1e1e">0.00E+00</div>
<div class="t" style="left:13.4px;width:236.2px;overflow:hidden;top:711.89px;height:12px;font-size:9.16px;color:#1e1e1e;transform:scaleX(1.04)">Alkene (unspecified) [Group NMVOC to air]</div>
<div class="t" style="left:259.5px;width:74.0px;text-align:center;top:711.89px;font-size:8.88px;color:#1e1e1e">Mass</div>
<div class="t" style="left:333.5px;width:67.80000000000001px;text-align:center;top:711.89px;font-size:8.88px;color:#1e1e1e">2.15E-08</div>
<div class="t" style="left:401.3px;width:44.099999999999966px;text-align:center;top:711.89px;font-size:8.88px;color:#1e1e1e">kg</div>
<div class="t" style="left:445.4px;width:126.30000000000007px;text-align:center;top:711.89px;font-size:8.88px;color:#1e1e1e;transform:scaleX(0.89);transform-origin:50% 0">FALSE</div>
<div class="t" style="left:571.7px;width:121.89999999999998px;text-align:center;top:711.89px;font-size:8.88px;color:#1e1e1e;transform:scaleX(0.89);transform-origin:50% 0">FALSE</div>
<div class="t" style="left:693.6px;width:97.69999999999993px;text-align:center;top:711.89px;font-size:8.88px;color:#1e1e1e">1.08E-07</div>
<div class="t" style="left:791.3px;width:116.20000000000005px;text-align:center;top:711.89px;font-size:8.88px;color:#1e1e1e">0.00E+00</div>
<div class="t" style="left:13.4px;width:236.2px;overflow:hidden;top:725.31px;height:12px;font-size:9.16px;color:#1e1e1e;transform:scaleX(1.04)">Aluminium [Inorganic emissions to agricultural soil]</div>
<div class="t" style="left:259.5px;width:74.0px;text-align:center;top:725.31px;font-size:8.88px;color:#1e1e1e">Mass</div>
<div class="t" style="left:333.5px;width:67.80000000000001px;text-align:center;top:725.31px;font-size:8.88px;color:#1e1e1e">3.28E-14</div>
<div class="t" style="left:401.3px;width:44.099999999999966px;text-align:center;top:725.31px;font-size:8.88px;color:#1e1e1e">kg</div>
<div class="t" style="left:445.4px;width:126.30000000000007px;text-align:center;top:725.31px;font-size:8.88px;color:#1e1e1e;transform:scaleX(0.89);transform-origin:50% 0">FALSE</div>
<div class="t" style="left:571.7px;width:121.89999999999998px;text-align:center;top:725.31px;font-size:8.88px;color:#1e1e1e;transform:scaleX(0.89);transform-origin:50% 0">FALSE</div>
<div class="t" style="left:693.6px;width:97.69999999999993px;text-align:center;top:725.31px;font-size:8.88px;color:#1e1e1e">1.64E-13</div>
<div class="t" style="left:791.3px;width:116.20000000000005px;text-align:center;top:725.31px;font-size:8.88px;color:#1e1e1e">0.00E+00</div>
<div class="t" style="left:13.4px;width:236.2px;overflow:hidden;top:738.72px;height:12px;font-size:9.16px;color:#1e1e1e;transform:scaleX(1.04)">Aluminium [Inorganic emissions to air]</div>
<div class="t" style="left:259.5px;width:74.0px;text-align:center;top:738.72px;font-size:8.88px;color:#1e1e1e">Mass</div>
<div class="t" style="left:333.5px;width:67.80000000000001px;text-align:center;top:738.72px;font-size:8.88px;color:#1e1e1e">1.57E-10</div>
<div class="t" style="left:401.3px;width:44.099999999999966px;text-align:center;top:738.72px;font-size:8.88px;color:#1e1e1e">kg</div>
<div class="t" style="left:445.4px;width:126.30000000000007px;text-align:center;top:738.72px;font-size:8.88px;color:#1e1e1e;transform:scaleX(0.89);transform-origin:50% 0">FALSE</div>
<div class="t" style="left:571.7px;width:121.89999999999998px;text-align:center;top:738.72px;font-size:8.88px;color:#1e1e1e;transform:scaleX(0.89);transform-origin:50% 0">FALSE</div>
<div class="t" style="left:693.6px;width:97.69999999999993px;text-align:center;top:738.72px;font-size:8.88px;color:#1e1e1e">7.87E-10</div>
<div class="t" style="left:791.3px;width:116.20000000000005px;text-align:center;top:738.72px;font-size:8.88px;color:#1e1e1e">0.00E+00</div>
<div class="t" style="left:13.4px;width:236.2px;overflow:hidden;top:752.14px;height:12px;font-size:9.16px;color:#1e1e1e;transform:scaleX(1.04)">Aluminium [Inorganic emissions to fresh water]</div>
<div class="t" style="left:259.5px;width:74.0px;text-align:center;top:752.14px;font-size:8.88px;color:#1e1e1e">Mass</div>
<div class="t" style="left:333.5px;width:67.80000000000001px;text-align:center;top:752.14px;font-size:8.88px;color:#1e1e1e">6.46E-08</div>
<div class="t" style="left:401.3px;width:44.099999999999966px;text-align:center;top:752.14px;font-size:8.88px;color:#1e1e1e">kg</div>
<div class="t" style="left:445.4px;width:126.30000000000007px;text-align:center;top:752.14px;font-size:8.88px;color:#1e1e1e;transform:scaleX(0.89);transform-origin:50% 0">FALSE</div>
<div class="t" style="left:571.7px;width:121.89999999999998px;text-align:center;top:752.14px;font-size:8.88px;color:#1e1e1e;transform:scaleX(0.89);transform-origin:50% 0">FALSE</div>
<div class="t" style="left:693.6px;width:97.69999999999993px;text-align:center;top:752.14px;font-size:8.88px;color:#1e1e1e">3.23E-07</div>
<div class="t" style="left:791.3px;width:116.20000000000005px;text-align:center;top:752.14px;font-size:8.88px;color:#1e1e1e">0.00E+00</div>
<div class="t" style="left:13.4px;width:236.2px;overflow:hidden;top:765.55px;height:12px;font-size:9.16px;color:#1e1e1e;transform:scaleX(1.04)">Aluminium [Inorganic emissions to industrial soil]</div>
<div class="t" style="left:259.5px;width:74.0px;text-align:center;top:765.55px;font-size:8.88px;color:#1e1e1e">Mass</div>
<div class="t" style="left:333.5px;width:67.80000000000001px;text-align:center;top:765.55px;font-size:8.88px;color:#1e1e1e">2.82E-07</div>
<div class="t" style="left:401.3px;width:44.099999999999966px;text-align:center;top:765.55px;font-size:8.88px;color:#1e1e1e">kg</div>
<div class="t" style="left:445.4px;width:126.30000000000007px;text-align:center;top:765.55px;font-size:8.88px;color:#1e1e1e;transform:scaleX(0.89);transform-origin:50% 0">FALSE</div>
<div class="t" style="left:571.7px;width:121.89999999999998px;text-align:center;top:765.55px;font-size:8.88px;color:#1e1e1e;transform:scaleX(0.89);transform-origin:50% 0">FALSE</div>
<div class="t" style="left:693.6px;width:97.69999999999993px;text-align:center;top:765.55px;font-size:8.88px;color:#1e1e1e">1.41E-06</div>
<div class="t" style="left:791.3px;width:116.20000000000005px;text-align:center;top:765.55px;font-size:8.88px;color:#1e1e1e">0.00E+00</div>
<div class="t" style="left:13.4px;width:236.2px;overflow:hidden;top:778.97px;height:12px;font-size:9.16px;color:#1e1e1e;transform:scaleX(1.04)">Aluminium [Inorganic emissions to sea water]</div>
<div class="t" style="left:259.5px;width:74.0px;text-align:center;top:778.97px;font-size:8.88px;color:#1e1e1e">Mass</div>
<div class="t" style="left:333.5px;width:67.80000000000001px;text-align:center;top:778.97px;font-size:8.88px;color:#1e1e1e">1.66E-12</div>
<div class="t" style="left:401.3px;width:44.099999999999966px;text-align:center;top:778.97px;font-size:8.88px;color:#1e1e1e">kg</div>
<div class="t" style="left:445.4px;width:126.30000000000007px;text-align:center;top:778.97px;font-size:8.88px;color:#1e1e1e;transform:scaleX(0.89);transform-origin:50% 0">FALSE</div>
<div class="t" style="left:571.7px;width:121.89999999999998px;text-align:center;top:778.97px;font-size:8.88px;color:#1e1e1e;transform:scaleX(0.89);transform-origin:50% 0">FALSE</div>
<div class="t" style="left:693.6px;width:97.69999999999993px;text-align:center;top:778.97px;font-size:8.88px;color:#1e1e1e">8.30E-12</div>
<div class="t" style="left:791.3px;width:116.20000000000005px;text-align:center;top:778.97px;font-size:8.88px;color:#1e1e1e">0.00E+00</div>
<div class="t" style="left:13.4px;width:236.2px;overflow:hidden;top:792.38px;height:12px;font-size:9.16px;color:#1e1e1e;transform:scaleX(1.04)">Aluminium oxide (dust) [Particles to air]</div>
<div class="t" style="left:259.5px;width:74.0px;text-align:center;top:792.38px;font-size:8.88px;color:#1e1e1e">Mass</div>
<div class="t" style="left:333.5px;width:67.80000000000001px;text-align:center;top:792.38px;font-size:8.88px;color:#1e1e1e">3.01E-15</div>
<div class="t" style="left:401.3px;width:44.099999999999966px;text-align:center;top:792.38px;font-size:8.88px;color:#1e1e1e">kg</div>
<div class="t" style="left:445.4px;width:126.30000000000007px;text-align:center;top:792.38px;font-size:8.88px;color:#1e1e1e;transform:scaleX(0.89);transform-origin:50% 0">FALSE</div>
<div class="t" style="left:571.7px;width:121.89999999999998px;text-align:center;top:792.38px;font-size:8.88px;color:#1e1e1e;transform:scaleX(0.89);transform-origin:50% 0">FALSE</div>
<div class="t" style="left:693.6px;width:97.69999999999993px;text-align:center;top:792.38px;font-size:8.88px;color:#1e1e1e">1.51E-14</div>
<div class="t" style="left:791.3px;width:116.20000000000005px;text-align:center;top:792.38px;font-size:8.88px;color:#1e1e1e">0.00E+00</div>
<div class="t" style="left:13.4px;width:236.2px;overflow:hidden;top:805.80px;height:12px;font-size:9.16px;color:#1e1e1e;transform:scaleX(1.04)">Americium (Am241) [Radioactive emissions to fresh water]</div>
<div class="t" style="left:259.5px;width:74.0px;text-align:center;top:805.80px;font-size:8.88px;color:#1e1e1e">Activity</div>
<div class="t" style="left:333.5px;width:67.80000000000001px;text-align:center;top:805.80px;font-size:8.88px;color:#1e1e1e">6.22E-07</div>
<div class="t" style="left:401.3px;width:44.099999999999966px;text-align:center;top:805.80px;font-size:8.88px;color:#1e1e1e">Bq</div>
<div class="t" style="left:445.4px;width:126.30000000000007px;text-align:center;top:805.80px;font-size:8.88px;color:#1e1e1e;transform:scaleX(0.89);transform-origin:50% 0">FALSE</div>
<div class="t" style="left:571.7px;width:121.89999999999998px;text-align:center;top:805.80px;font-size:8.88px;color:#1e1e1e;transform:scaleX(0.89);transform-origin:50% 0">FALSE</div>
<div class="t" style="left:693.6px;width:97.69999999999993px;text-align:center;top:805.80px;font-size:8.88px;color:#1e1e1e">3.11E-06</div>
<div class="t" style="left:791.3px;width:116.20000000000005px;text-align:center;top:805.80px;font-size:8.88px;color:#1e1e1e">0.00E+00</div>
<div class="t" style="left:13.4px;width:236.2px;overflow:hidden;top:819.21px;height:12px;font-size:9.16px;color:#1e1e1e;transform:scaleX(1.04)">Ammonia [Inorganic emissions to air]</div>
<div class="t" style="left:259.5px;width:74.0px;text-align:center;top:819.21px;font-size:8.88px;color:#1e1e1e">Mass</div>
<div class="t" style="left:333.5px;width:67.80000000000001px;text-align:center;top:819.21px;font-size:8.88px;color:#1e1e1e">7.72E-07</div>
<div class="t" style="left:401.3px;width:44.099999999999966px;text-align:center;top:819.21px;font-size:8.88px;color:#1e1e1e">kg</div>
<div class="t" style="left:445.4px;width:126.30000000000007px;text-align:center;top:819.21px;font-size:8.88px;color:#1e1e1e;transform:scaleX(0.89);transform-origin:50% 0">FALSE</div>
<div class="t" style="left:571.7px;width:121.89999999999998px;text-align:center;top:819.21px;font-size:8.88px;color:#1e1e1e;transform:scaleX(0.89);transform-origin:50% 0">FALSE</div>
<div class="t" style="left:693.6px;width:97.69999999999993px;text-align:center;top:819.21px;font-size:8.88px;color:#1e1e1e">3.86E-06</div>
<div class="t" style="left:791.3px;width:116.20000000000005px;text-align:center;top:819.21px;font-size:8.88px;color:#1e1e1e">0.00E+00</div>
<div class="t" style="left:13.4px;width:236.2px;overflow:hidden;top:832.63px;height:12px;font-size:9.16px;color:#1e1e1e;transform:scaleX(1.04)">Ammonia [Inorganic emissions to fresh water]</div>
<div class="t" style="left:259.5px;width:74.0px;text-align:center;top:832.63px;font-size:8.88px;color:#1e1e1e">Mass</div>
<div class="t" style="left:333.5px;width:67.80000000000001px;text-align:center;top:832.63px;font-size:8.88px;color:#1e1e1e">2.04E-08</div>
<div class="t" style="left:401.3px;width:44.099999999999966px;text-align:center;top:832.63px;font-size:8.88px;color:#1e1e1e">kg</div>
<div class="t" style="left:445.4px;width:126.30000000000007px;text-align:center;top:832.63px;font-size:8.88px;color:#1e1e1e;transform:scaleX(0.89);transform-origin:50% 0">FALSE</div>
<div class="t" style="left:571.7px;width:121.89999999999998px;text-align:center;top:832.63px;font-size:8.88px;color:#1e1e1e;transform:scaleX(0.89);transform-origin:50% 0">FALSE</div>
<div class="t" style="left:693.6px;width:97.69999999999993px;text-align:center;top:832.63px;font-size:8.88px;color:#1e1e1e">1.02E-07</div>
<div class="t" style="left:791.3px;width:116.20000000000005px;text-align:center;top:832.63px;font-size:8.88px;color:#1e1e1e">0.00E+00</div>
<div class="t" style="left:13.4px;width:236.2px;overflow:hidden;top:846.04px;height:12px;font-size:9.16px;color:#1e1e1e;transform:scaleX(1.04)">Ammonia [Inorganic emissions to industrial soil]</div>
<div class="t" style="left:259.5px;width:74.0px;text-align:center;top:846.04px;font-size:8.88px;color:#1e1e1e">Mass</div>
<div class="t" style="left:333.5px;width:67.80000000000001px;text-align:center;top:846.04px;font-size:8.88px;color:#1e1e1e">1.53E-09</div>
<div class="t" style="left:401.3px;width:44.099999999999966px;text-align:center;top:846.04px;font-size:8.88px;color:#1e1e1e">kg</div>
<div class="t" style="left:445.4px;width:126.30000000000007px;text-align:center;top:846.04px;font-size:8.88px;color:#1e1e1e;transform:scaleX(0.89);transform-origin:50% 0">FALSE</div>
<div class="t" style="left:571.7px;width:121.89999999999998px;text-align:center;top:846.04px;font-size:8.88px;color:#1e1e1e;transform:scaleX(0.89);transform-origin:50% 0">FALSE</div>
<div class="t" style="left:693.6px;width:97.69999999999993px;text-align:center;top:846.04px;font-size:8.88px;color:#1e1e1e">7.65E-09</div>
<div class="t" style="left:791.3px;width:116.20000000000005px;text-align:center;top:846.04px;font-size:8.88px;color:#1e1e1e">0.00E+00</div>
<div class="t" style="left:13.4px;width:236.2px;overflow:hidden;top:859.46px;height:12px;font-size:9.16px;color:#1e1e1e;transform:scaleX(1.04)">Ammonia [Inorganic emissions to sea water]</div>
<div class="t" style="left:259.5px;width:74.0px;text-align:center;top:859.46px;font-size:8.88px;color:#1e1e1e">Mass</div>
<div class="t" style="left:333.5px;width:67.80000000000001px;text-align:center;top:859.46px;font-size:8.88px;color:#1e1e1e">-2.03E-16</div>
<div class="t" style="left:401.3px;width:44.099999999999966px;text-align:center;top:859.46px;font-size:8.88px;color:#1e1e1e">kg</div>
<div class="t" style="left:445.4px;width:126.30000000000007px;text-align:center;top:859.46px;font-size:8.88px;color:#1e1e1e;transform:scaleX(0.89);transform-origin:50% 0">FALSE</div>
<div class="t" style="left:571.7px;width:121.89999999999998px;text-align:center;top:859.46px;font-size:8.88px;color:#1e1e1e;transform:scaleX(0.89);transform-origin:50% 0">FALSE</div>
<div class="t" style="left:693.6px;width:97.69999999999993px;text-align:center;top:859.46px;font-size:8.88px;color:#1e1e1e">-1.01E-15</div>
<div class="t" style="left:791.3px;width:116.20000000000005px;text-align:center;top:859.46px;font-size:8.88px;color:#1e1e1e">0.00E+00</div>
<div class="t" style="left:13.4px;width:236.2px;overflow:hidden;top:872.87px;height:12px;font-size:9.16px;color:#1e1e1e;transform:scaleX(1.04)">Ammonium (total N) [Inorganic emissions to fresh water]</div>
<div class="t" style="left:259.5px;width:74.0px;text-align:center;top:872.87px;font-size:8.88px;color:#1e1e1e">Mass</div>
<div class="t" style="left:333.5px;width:67.80000000000001px;text-align:center;top:872.87px;font-size:8.88px;color:#1e1e1e">1.80E-13</div>
<div class="t" style="left:401.3px;width:44.099999999999966px;text-align:center;top:872.87px;font-size:8.88px;color:#1e1e1e">kg</div>
<div class="t" style="left:445.4px;width:126.30000000000007px;text-align:center;top:872.87px;font-size:8.88px;color:#1e1e1e;transform:scaleX(0.89);transform-origin:50% 0">FALSE</div>
<div class="t" style="left:571.7px;width:121.89999999999998px;text-align:center;top:872.87px;font-size:8.88px;color:#1e1e1e;transform:scaleX(0.89);transform-origin:50% 0">FALSE</div>
<div class="t" style="left:693.6px;width:97.69999999999993px;text-align:center;top:872.87px;font-size:8.88px;color:#1e1e1e">9.02E-13</div>
<div class="t" style="left:791.3px;width:116.20000000000005px;text-align:center;top:872.87px;font-size:8.88px;color:#1e1e1e">0.00E+00</div>
<div class="a" style="left:0;top:131.3px;width:11.7px;height:748.7px;background:#0a0a0a"></div>
<div class="t" style="left:-17.5px;width:40px;text-align:center;top:134.27px;font-size:9.01px;color:#dadada">1</div>
<div class="a" style="left:0;top:144.22px;width:11.7px;height:1px;background:#2a2a2a"></div>
<div class="t" style="left:-17.5px;width:40px;text-align:center;top:147.69px;font-size:9.01px;color:#dadada">2</div>
<div class="a" style="left:0;top:157.63px;width:11.7px;height:1px;background:#2a2a2a"></div>
<div class="t" style="left:-17.5px;width:40px;text-align:center;top:161.10px;font-size:9.01px;color:#dadada">3</div>
<div class="a" style="left:0;top:171.05px;width:11.7px;height:1px;background:#2a2a2a"></div>
<div class="t" style="left:-17.5px;width:40px;text-align:center;top:174.52px;font-size:9.01px;color:#dadada">4</div>
<div class="a" style="left:0;top:184.46px;width:11.7px;height:1px;background:#2a2a2a"></div>
<div class="t" style="left:-17.5px;width:40px;text-align:center;top:187.93px;font-size:9.01px;color:#dadada">5</div>
<div class="a" style="left:0;top:197.88px;width:11.7px;height:1px;background:#2a2a2a"></div>
<div class="t" style="left:-17.5px;width:40px;text-align:center;top:201.35px;font-size:9.01px;color:#dadada">6</div>
<div class="a" style="left:0;top:211.29px;width:11.7px;height:1px;background:#2a2a2a"></div>
<div class="t" style="left:-17.5px;width:40px;text-align:center;top:214.76px;font-size:9.01px;color:#dadada">7</div>
<div class="a" style="left:0;top:224.71px;width:11.7px;height:1px;background:#2a2a2a"></div>
<div class="t" style="left:-17.5px;width:40px;text-align:center;top:228.18px;font-size:9.01px;color:#dadada">8</div>
<div class="a" style="left:0;top:238.12px;width:11.7px;height:1px;background:#2a2a2a"></div>
<div class="t" style="left:-17.5px;width:40px;text-align:center;top:241.59px;font-size:9.01px;color:#dadada">9</div>
<div class="a" style="left:0;top:251.53px;width:11.7px;height:1px;background:#2a2a2a"></div>
<div class="t" style="left:-17.5px;width:40px;text-align:center;top:255.01px;font-size:9.01px;color:#dadada">10</div>
<div class="a" style="left:0;top:264.95px;width:11.7px;height:1px;background:#2a2a2a"></div>
<div class="t" style="left:-17.5px;width:40px;text-align:center;top:268.42px;font-size:9.01px;color:#dadada">11</div>
<div class="a" style="left:0;top:278.37px;width:11.7px;height:1px;background:#2a2a2a"></div>
<div class="t" style="left:-17.5px;width:40px;text-align:center;top:281.84px;font-size:9.01px;color:#dadada">12</div>
<div class="a" style="left:0;top:291.78px;width:11.7px;height:1px;background:#2a2a2a"></div>
<div class="t" style="left:-17.5px;width:40px;text-align:center;top:295.25px;font-size:9.01px;color:#dadada">13</div>
<div class="a" style="left:0;top:305.19px;width:11.7px;height:1px;background:#2a2a2a"></div>
<div class="t" style="left:-17.5px;width:40px;text-align:center;top:308.67px;font-size:9.01px;color:#dadada">14</div>
<div class="a" style="left:0;top:318.61px;width:11.7px;height:1px;background:#2a2a2a"></div>
<div class="t" style="left:-17.5px;width:40px;text-align:center;top:322.08px;font-size:9.01px;color:#dadada">15</div>
<div class="a" style="left:0;top:332.02px;width:11.7px;height:1px;background:#2a2a2a"></div>
<div class="t" style="left:-17.5px;width:40px;text-align:center;top:335.50px;font-size:9.01px;color:#dadada">16</div>
<div class="a" style="left:0;top:345.44px;width:11.7px;height:1px;background:#2a2a2a"></div>
<div class="t" style="left:-17.5px;width:40px;text-align:center;top:348.91px;font-size:9.01px;color:#dadada">17</div>
<div class="a" style="left:0;top:358.86px;width:11.7px;height:1px;background:#2a2a2a"></div>
<div class="t" style="left:-17.5px;width:40px;text-align:center;top:362.33px;font-size:9.01px;color:#dadada">18</div>
<div class="a" style="left:0;top:372.27px;width:11.7px;height:1px;background:#2a2a2a"></div>
<div class="t" style="left:-17.5px;width:40px;text-align:center;top:375.74px;font-size:9.01px;color:#dadada">19</div>
<div class="a" style="left:0;top:386.19px;width:11.7px;height:13.41px;background:#5a5a5a;border-right:1.6px solid #4f8a63"></div>
<div class="a" style="left:0;top:385.69px;width:11.7px;height:1px;background:#2a2a2a"></div>
<div class="t" style="left:-17.5px;width:40px;text-align:center;top:389.16px;font-size:9.01px;color:#dadada">20</div>
<div class="a" style="left:0;top:399.10px;width:11.7px;height:1px;background:#2a2a2a"></div>
<div class="t" style="left:-17.5px;width:40px;text-align:center;top:402.57px;font-size:9.01px;color:#dadada">21</div>
<div class="a" style="left:0;top:412.51px;width:11.7px;height:1px;background:#2a2a2a"></div>
<div class="t" style="left:-17.5px;width:40px;text-align:center;top:415.99px;font-size:9.01px;color:#dadada">22</div>
<div class="a" style="left:0;top:425.93px;width:11.7px;height:1px;background:#2a2a2a"></div>
<div class="t" style="left:-17.5px;width:40px;text-align:center;top:429.40px;font-size:9.01px;color:#dadada">23</div>
<div class="a" style="left:0;top:439.34px;width:11.7px;height:1px;background:#2a2a2a"></div>
<div class="t" style="left:-17.5px;width:40px;text-align:center;top:442.82px;font-size:9.01px;color:#dadada">24</div>
<div class="a" style="left:0;top:452.76px;width:11.7px;height:1px;background:#2a2a2a"></div>
<div class="t" style="left:-17.5px;width:40px;text-align:center;top:456.23px;font-size:9.01px;color:#dadada">25</div>
<div class="a" style="left:0;top:466.18px;width:11.7px;height:1px;background:#2a2a2a"></div>
<div class="t" style="left:-17.5px;width:40px;text-align:center;top:469.65px;font-size:9.01px;color:#dadada">26</div>
<div class="a" style="left:0;top:479.59px;width:11.7px;height:1px;background:#2a2a2a"></div>
<div class="t" style="left:-17.5px;width:40px;text-align:center;top:483.06px;font-size:9.01px;color:#dadada">27</div>
<div class="a" style="left:0;top:493.00px;width:11.7px;height:1px;background:#2a2a2a"></div>
<div class="t" style="left:-17.5px;width:40px;text-align:center;top:496.48px;font-size:9.01px;color:#dadada">28</div>
<div class="a" style="left:0;top:506.42px;width:11.7px;height:1px;background:#2a2a2a"></div>
<div class="t" style="left:-17.5px;width:40px;text-align:center;top:509.89px;font-size:9.01px;color:#dadada">29</div>
<div class="a" style="left:0;top:519.84px;width:11.7px;height:1px;background:#2a2a2a"></div>
<div class="t" style="left:-17.5px;width:40px;text-align:center;top:523.31px;font-size:9.01px;color:#dadada">30</div>
<div class="a" style="left:0;top:533.25px;width:11.7px;height:1px;background:#2a2a2a"></div>
<div class="t" style="left:-17.5px;width:40px;text-align:center;top:536.72px;font-size:9.01px;color:#dadada">31</div>
<div class="a" style="left:0;top:546.66px;width:11.7px;height:1px;background:#2a2a2a"></div>
<div class="t" style="left:-17.5px;width:40px;text-align:center;top:550.14px;font-size:9.01px;color:#dadada">32</div>
<div class="a" style="left:0;top:560.08px;width:11.7px;height:1px;background:#2a2a2a"></div>
<div class="t" style="left:-17.5px;width:40px;text-align:center;top:563.55px;font-size:9.01px;color:#dadada">33</div>
<div class="a" style="left:0;top:573.50px;width:11.7px;height:1px;background:#2a2a2a"></div>
<div class="t" style="left:-17.5px;width:40px;text-align:center;top:576.97px;font-size:9.01px;color:#dadada">34</div>
<div class="a" style="left:0;top:586.91px;width:11.7px;height:1px;background:#2a2a2a"></div>
<div class="t" style="left:-17.5px;width:40px;text-align:center;top:590.38px;font-size:9.01px;color:#dadada">35</div>
<div class="a" style="left:0;top:600.33px;width:11.7px;height:1px;background:#2a2a2a"></div>
<div class="t" style="left:-17.5px;width:40px;text-align:center;top:603.80px;font-size:9.01px;color:#dadada">36</div>
<div class="a" style="left:0;top:613.74px;width:11.7px;height:1px;background:#2a2a2a"></div>
<div class="t" style="left:-17.5px;width:40px;text-align:center;top:617.21px;font-size:9.01px;color:#dadada">37</div>
<div class="a" style="left:0;top:627.15px;width:11.7px;height:1px;background:#2a2a2a"></div>
<div class="t" style="left:-17.5px;width:40px;text-align:center;top:630.63px;font-size:9.01px;color:#dadada">38</div>
<div class="a" style="left:0;top:640.57px;width:11.7px;height:1px;background:#2a2a2a"></div>
<div class="t" style="left:-17.5px;width:40px;text-align:center;top:644.04px;font-size:9.01px;color:#dadada">39</div>
<div class="a" style="left:0;top:653.98px;width:11.7px;height:1px;background:#2a2a2a"></div>
<div class="t" style="left:-17.5px;width:40px;text-align:center;top:657.46px;font-size:9.01px;color:#dadada">40</div>
<div class="a" style="left:0;top:667.40px;width:11.7px;height:1px;background:#2a2a2a"></div>
<div class="t" style="left:-17.5px;width:40px;text-align:center;top:670.87px;font-size:9.01px;color:#dadada">41</div>
<div class="a" style="left:0;top:680.82px;width:11.7px;height:1px;background:#2a2a2a"></div>
<div class="t" style="left:-17.5px;width:40px;text-align:center;top:684.29px;font-size:9.01px;color:#dadada">42</div>
<div class="a" style="left:0;top:694.23px;width:11.7px;height:1px;background:#2a2a2a"></div>
<div class="t" style="left:-17.5px;width:40px;text-align:center;top:697.70px;font-size:9.01px;color:#dadada">43</div>
<div class="a" style="left:0;top:707.64px;width:11.7px;height:1px;background:#2a2a2a"></div>
<div class="t" style="left:-17.5px;width:40px;text-align:center;top:711.12px;font-size:9.01px;color:#dadada">44</div>
<div class="a" style="left:0;top:721.06px;width:11.7px;height:1px;background:#2a2a2a"></div>
<div class="t" style="left:-17.5px;width:40px;text-align:center;top:724.53px;font-size:9.01px;color:#dadada">45</div>
<div class="a" style="left:0;top:734.47px;width:11.7px;height:1px;background:#2a2a2a"></div>
<div class="t" style="left:-17.5px;width:40px;text-align:center;top:737.95px;font-size:9.01px;color:#dadada">46</div>
<div class="a" style="left:0;top:747.89px;width:11.7px;height:1px;background:#2a2a2a"></div>
<div class="t" style="left:-17.5px;width:40px;text-align:center;top:751.36px;font-size:9.01px;color:#dadada">47</div>
<div class="a" style="left:0;top:761.31px;width:11.7px;height:1px;background:#2a2a2a"></div>
<div class="t" style="left:-17.5px;width:40px;text-align:center;top:764.78px;font-size:9.01px;color:#dadada">48</div>
<div class="a" style="left:0;top:774.72px;width:11.7px;height:1px;background:#2a2a2a"></div>
<div class="t" style="left:-17.5px;width:40px;text-align:center;top:778.19px;font-size:9.01px;color:#dadada">49</div>
<div class="a" style="left:0;top:788.13px;width:11.7px;height:1px;background:#2a2a2a"></div>
<div class="t" style="left:-17.5px;width:40px;text-align:center;top:791.61px;font-size:9.01px;color:#dadada">50</div>
<div class="a" style="left:0;top:801.55px;width:11.7px;height:1px;background:#2a2a2a"></div>
<div class="t" style="left:-17.5px;width:40px;text-align:center;top:805.02px;font-size:9.01px;color:#dadada">51</div>
<div class="a" style="left:0;top:814.96px;width:11.7px;height:1px;background:#2a2a2a"></div>
<div class="t" style="left:-17.5px;width:40px;text-align:center;top:818.44px;font-size:9.01px;color:#dadada">52</div>
<div class="a" style="left:0;top:828.38px;width:11.7px;height:1px;background:#2a2a2a"></div>
<div class="t" style="left:-17.5px;width:40px;text-align:center;top:831.85px;font-size:9.01px;color:#dadada">53</div>
<div class="a" style="left:0;top:841.80px;width:11.7px;height:1px;background:#2a2a2a"></div>
<div class="t" style="left:-17.5px;width:40px;text-align:center;top:845.27px;font-size:9.01px;color:#dadada">54</div>
<div class="a" style="left:0;top:855.21px;width:11.7px;height:1px;background:#2a2a2a"></div>
<div class="t" style="left:-17.5px;width:40px;text-align:center;top:858.68px;font-size:9.01px;color:#dadada">55</div>
<div class="a" style="left:0;top:868.62px;width:11.7px;height:1px;background:#2a2a2a"></div>
<div class="t" style="left:-17.5px;width:40px;text-align:center;top:872.10px;font-size:9.01px;color:#dadada">56</div>
<div class="a" style="left:0;top:880px;width:1024px;height:21px;background:#0e0e0e"></div>
<div class="a" style="left:0;top:880px;width:48px;height:14.8px;background:#262626"></div>
<svg class="a" style="left:7px;top:884.5px" width="4" height="6" viewBox="0 0 4 6"><path d="M3.5 0.3v5.4L0.4 3z" fill="#d0d0d0"/></svg>
<svg class="a" style="left:23px;top:884.5px" width="4" height="6" viewBox="0 0 4 6"><path d="M0.5 0.3v5.4L3.6 3z" fill="#d0d0d0"/></svg>
<svg class="a" style="left:36px;top:887px" width="9" height="2" viewBox="0 0 9 2"><circle cx="1" cy="1" r="0.8" fill="#d0d0d0"/><circle cx="4.3" cy="1" r="0.8" fill="#d0d0d0"/><circle cx="7.6" cy="1" r="0.8" fill="#d0d0d0"/></svg>
<div class="a" style="left:48.1px;top:880px;width:54.7px;height:13.6px;background:linear-gradient(#fffaf0,#f8ecc4)"></div>
<div class="a" style="left:48.1px;top:892.4px;width:54.7px;height:1.3px;background:#3f8f55"></div>
<div class="t" style="left:54.00px;top:882.07px;font-size:9.01px;color:#2f7a45;transform:scaleX(0.953);font-weight:bold;">LCIA GWP</div>
<div class="tab ot" style="left:103.6px;width:49.2px"></div>
<div class="t" style="left:109.48px;top:882.25px;font-size:9.16px;color:#3a2800;transform:scaleX(0.920);">LCIA HTP</div>
<div class="tab ot" style="left:155.2px;width:42.9px"></div>
<div class="t" style="left:160.96px;top:882.25px;font-size:9.16px;color:#3a2800;transform:scaleX(0.920);">LCIA AP</div>
<div class="tab ot" style="left:201.8px;width:57.0px"></div>
<div class="t" style="left:206.65px;top:882.25px;font-size:9.16px;color:#3a2800;transform:scaleX(0.920);">LCIA FAETP</div>
<div class="tab ot" style="left:260.5px;width:64.0px"></div>
<div class="t" style="left:267.69px;top:882.25px;font-size:9.16px;color:#3a2800;transform:scaleX(0.920);">LCIA MAETP</div>
<div class="tab ot" style="left:326.2px;width:91.6px"></div>
<div class="t" style="left:335.08px;top:882.25px;font-size:9.16px;color:#3a2800;transform:scaleX(0.920);">LCIA ADP elements</div>
<div class="tab ot" style="left:420.8px;width:75.0px"></div>
<div class="t" style="left:428.88px;top:882.25px;font-size:9.16px;color:#3a2800;transform:scaleX(0.920);">LCIA ADP fossil</div>
<div class="tab ot" style="left:498.5px;width:40.3px"></div>
<div class="t" style="left:502.73px;top:882.25px;font-size:9.16px;color:#3a2800;transform:scaleX(0.920);">LCIA EP</div>
<div class="tab ot" style="left:542.2px;width:53.4px"></div>
<div class="t" style="left:546.66px;top:882.25px;font-size:9.16px;color:#3a2800;transform:scaleX(0.920);">LCIA POCP</div>
<div class="tab ot" style="left:599px;width:49.2px"></div>
<div class="t" style="left:604.16px;top:882.25px;font-size:9.16px;color:#3a2800;transform:scaleX(0.920);">LCIA ODP</div>
<div class="tab ot" style="left:651px;width:53.8px"></div>
<div class="t" style="left:656.90px;top:882.25px;font-size:9.16px;color:#3a2800;transform:scaleX(0.920);">LCIA TETP</div>
<div class="tab bt" style="left:706.3px;width:93.9px"></div>
<div class="t" style="left:715.80px;top:882.25px;font-size:9.16px;color:#0e3050;transform:scaleX(0.920);">Characterized GWP</div>
<div class="tab bt" style="left:802.5px;width:83.2px"></div>
<div class="t" style="left:811.33px;top:882.25px;font-size:9.16px;color:#0e3050;transform:scaleX(0.920);">Characterized AP</div>
<div class="tab bt" style="left:888.3px;width:89.4px"></div>
<div class="t" style="left:897.18px;top:882.25px;font-size:9.16px;color:#0e3050;transform:scaleX(0.920);">Characterized HTP</div>
<div class="tab bt" style="left:980.3px;width:39.1px;overflow:hidden"></div>
<div style="position:absolute;left:980.3px;top:880px;width:39px;height:14px;overflow:hidden">
<div class="t" style="left:8.50px;top:2.25px;font-size:9.16px;color:#0e3050;transform:scaleX(0.920);">Characterized</div>
</div>
<div class="a" style="left:1019.4px;top:880px;width:5px;height:15px;background:#222"></div>
<div class="a" style="left:1021.5px;top:888.5px;width:3px;height:2px;background:#e0e0e0"></div>
<div style="position:absolute;left:0;top:895px;width:1024px;height:6px;overflow:hidden;background:#151515">
<div class="t" style="left:2.50px;top:3.62px;font-size:8.72px;color:#c8c8c8;transform:scaleX(0.754);">Ready</div>
<svg class="a" style="left:31px;top:2.5px" width="10" height="6" viewBox="0 0 10 6"><circle cx="5" cy="3" r="2.5" fill="none" stroke="#c8c8c8" stroke-width="1"/></svg>
<div class="t" style="left:44.50px;top:3.62px;font-size:8.72px;color:#c8c8c8;transform:scaleX(0.899);">Accessibility: Investigate</div>
</div>
</body></html>
